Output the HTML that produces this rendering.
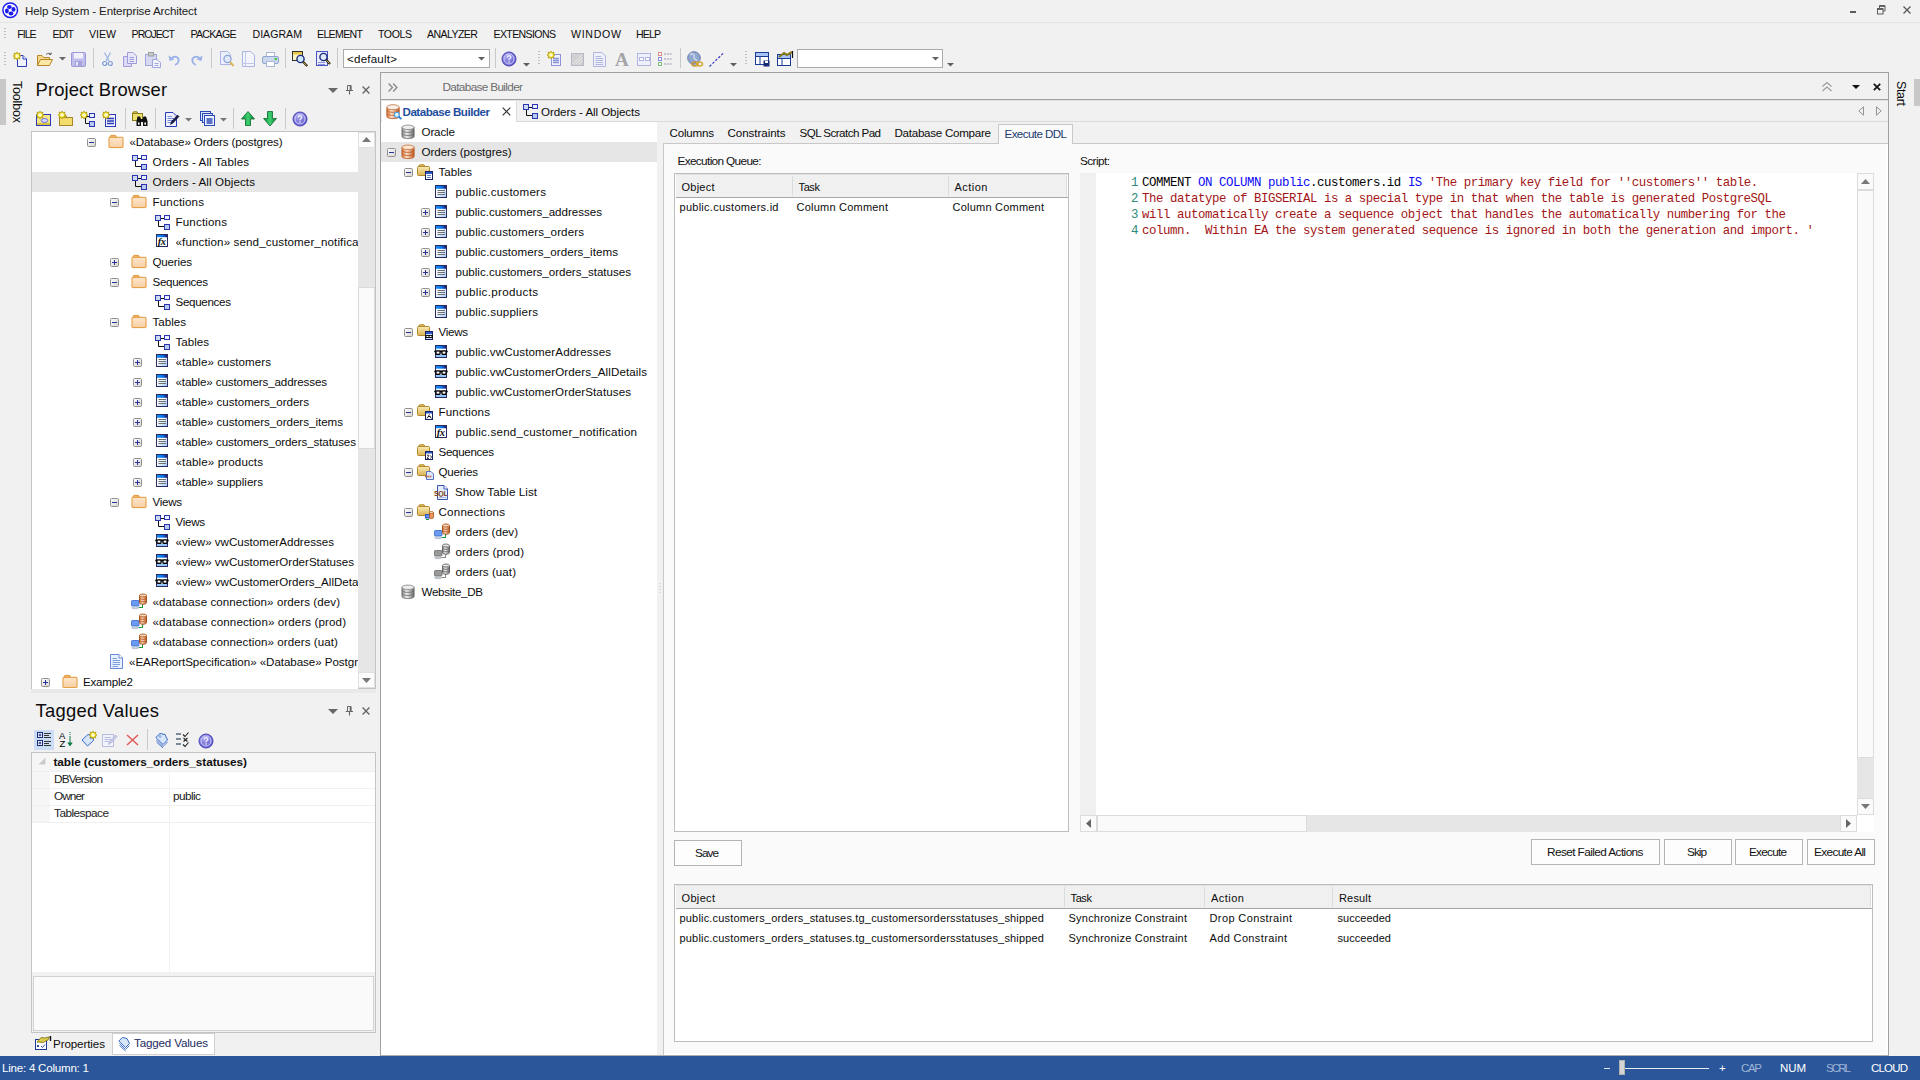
<!DOCTYPE html><html><head><meta charset="utf-8"><title>Help System - Enterprise Architect</title><style>
html,body{margin:0;padding:0}
body{width:1920px;height:1080px;overflow:hidden;background:#f1f1f1;position:relative;font-family:'Liberation Sans',sans-serif;}
body>div,body>svg{position:absolute}
.t{position:absolute}
.i{position:absolute;overflow:visible}
</style></head><body><svg width="0" height="0" style="position:absolute"><defs><linearGradient id="gFold" x1="0" y1="0" x2="0" y2="1"><stop offset="0" stop-color="#fde6cc"/><stop offset="1" stop-color="#f8cfa2"/></linearGradient><linearGradient id="gYF" x1="0" y1="0" x2="0" y2="1"><stop offset="0" stop-color="#f9ebb4"/><stop offset="1" stop-color="#d9b254"/></linearGradient><linearGradient id="gBlueBar" x1="0" y1="0" x2="1" y2="0"><stop offset="0" stop-color="#0a3fa8"/><stop offset="1" stop-color="#5aa0f0"/></linearGradient><linearGradient id="gBar2" x1="0" y1="0" x2="1" y2="0"><stop offset="0" stop-color="#1492ff"/><stop offset=".6" stop-color="#0a6ee6"/><stop offset="1" stop-color="#1a1a6e"/></linearGradient><linearGradient id="gTB" x1="0" y1="0" x2="1" y2="1"><stop offset="0" stop-color="#ffffff"/><stop offset=".45" stop-color="#f4f8ff"/><stop offset="1" stop-color="#9cc6fa"/></linearGradient><linearGradient id="gCylG" x1="0" y1="0" x2="1" y2="0"><stop offset="0" stop-color="#8a8a8a"/><stop offset=".4" stop-color="#eeeeee"/><stop offset="1" stop-color="#6a6a6a"/></linearGradient><linearGradient id="gCylO" x1="0" y1="0" x2="1" y2="0"><stop offset="0" stop-color="#d8763a"/><stop offset=".4" stop-color="#fde0c8"/><stop offset="1" stop-color="#c05a22"/></linearGradient><radialGradient id="gHelp" cx=".4" cy=".35" r=".7"><stop offset="0" stop-color="#a9a6ee"/><stop offset="1" stop-color="#5a55c8"/></radialGradient><linearGradient id="gBox" x1="0" y1="0" x2="1" y2="1"><stop offset="0" stop-color="#ffffff"/><stop offset="1" stop-color="#d6d3cc"/></linearGradient><linearGradient id="gUp" x1="0" y1="0" x2="1" y2="0"><stop offset="0" stop-color="#0a8a3a"/><stop offset=".5" stop-color="#3ed070"/><stop offset="1" stop-color="#0a7a30"/></linearGradient></defs></svg>
<div style="left:0px;top:22px;width:1920px;height:1px;background:#e4e4e4;"></div>
<svg class="i" style="left:2px;top:2px" width="17" height="17" viewBox="0 0 17 17"><circle cx="8.2" cy="8.2" r="7.3" fill="#fff" stroke="#1c1cf2" stroke-width="1.5"/><g fill="#1c1cf2"><ellipse cx="7.4" cy="4.9" rx="2.4" ry="2" /><ellipse cx="11.5" cy="7.4" rx="2" ry="2.4"/><ellipse cx="9" cy="11.5" rx="2.4" ry="2"/><ellipse cx="4.9" cy="9" rx="2" ry="2.4"/></g></svg>
<div id="t0" class="t" style="left:25px;top:3.00px;height:16px;line-height:16px;font-size:11.6px;color:#222;white-space:pre;letter-spacing:-0.138px;">Help System - Enterprise Architect</div>
<div style="left:1850px;top:11px;width:6px;height:2px;background:#5c5c5c;"></div>
<svg class="i" style="left:1877px;top:5px" width="9" height="10" viewBox="0 0 9 10"><path d="M2.5 3.5V.5H8V6H6" fill="none" stroke="#5c5c5c"/><path d="M2.5 1.2H8" stroke="#5c5c5c" stroke-width="1.4"/><rect x=".5" y="3.5" width="5.5" height="5.5" fill="none" stroke="#5c5c5c"/><path d="M.5 4.2H6" stroke="#5c5c5c" stroke-width="1.4"/></svg>
<svg class="i" style="left:1903px;top:6px" width="8" height="8" viewBox="0 0 8 8"><path d="M.5 .5L7.5 7.5M7.5 .5L.5 7.5" stroke="#555" stroke-width="1.2"/></svg>
<div style="left:4px;top:28px;width:2px;height:1px;background:#bdbdbd;"></div>
<div style="left:4px;top:31px;width:2px;height:1px;background:#bdbdbd;"></div>
<div style="left:4px;top:34px;width:2px;height:1px;background:#bdbdbd;"></div>
<div style="left:4px;top:37px;width:2px;height:1px;background:#bdbdbd;"></div>
<div id="t1" class="t" style="left:17.3px;top:27.00px;height:15px;line-height:15px;font-size:10.6px;color:#0c0c0c;white-space:pre;letter-spacing:-1.025px;">FILE</div>
<div id="t2" class="t" style="left:52.5px;top:27.00px;height:15px;line-height:15px;font-size:10.6px;color:#0c0c0c;white-space:pre;letter-spacing:-0.880px;">EDIT</div>
<div id="t3" class="t" style="left:89px;top:27.00px;height:15px;line-height:15px;font-size:10.6px;color:#0c0c0c;white-space:pre;letter-spacing:-0.026px;">VIEW</div>
<div id="t4" class="t" style="left:131.6px;top:27.00px;height:15px;line-height:15px;font-size:10.6px;color:#0c0c0c;white-space:pre;letter-spacing:-1.009px;">PROJECT</div>
<div id="t5" class="t" style="left:190.5px;top:27.00px;height:15px;line-height:15px;font-size:10.6px;color:#0c0c0c;white-space:pre;letter-spacing:-0.740px;">PACKAGE</div>
<div id="t6" class="t" style="left:252.5px;top:27.00px;height:15px;line-height:15px;font-size:10.6px;color:#0c0c0c;white-space:pre;letter-spacing:0.008px;">DIAGRAM</div>
<div id="t7" class="t" style="left:317px;top:27.00px;height:15px;line-height:15px;font-size:10.6px;color:#0c0c0c;white-space:pre;letter-spacing:-0.674px;">ELEMENT</div>
<div id="t8" class="t" style="left:378px;top:27.00px;height:15px;line-height:15px;font-size:10.6px;color:#0c0c0c;white-space:pre;letter-spacing:-0.430px;">TOOLS</div>
<div id="t9" class="t" style="left:427px;top:27.00px;height:15px;line-height:15px;font-size:10.6px;color:#0c0c0c;white-space:pre;letter-spacing:-0.594px;">ANALYZER</div>
<div id="t10" class="t" style="left:493.5px;top:27.00px;height:15px;line-height:15px;font-size:10.6px;color:#0c0c0c;white-space:pre;letter-spacing:-0.644px;">EXTENSIONS</div>
<div id="t11" class="t" style="left:571px;top:27.00px;height:15px;line-height:15px;font-size:10.6px;color:#0c0c0c;white-space:pre;letter-spacing:0.703px;">WINDOW</div>
<div id="t12" class="t" style="left:636px;top:27.00px;height:15px;line-height:15px;font-size:10.6px;color:#0c0c0c;white-space:pre;letter-spacing:-0.896px;">HELP</div>
<div style="left:4px;top:52px;width:2px;height:1px;background:#bdbdbd;"></div>
<div style="left:4px;top:55px;width:2px;height:1px;background:#bdbdbd;"></div>
<div style="left:4px;top:58px;width:2px;height:1px;background:#bdbdbd;"></div>
<div style="left:4px;top:61px;width:2px;height:1px;background:#bdbdbd;"></div>
<div style="left:4px;top:64px;width:2px;height:1px;background:#bdbdbd;"></div>
<svg class="i" style="left:13px;top:51px" width="16" height="17" viewBox="0 0 16 17"><path d="M4.5 4.5H10L13.5 8V15.5H4.5Z" fill="#eef3ff" stroke="#2a3ab8"/><path d="M10 4.5V8H13.5" fill="#fff" stroke="#2a3ab8"/></svg>
<svg class="i" style="left:13px;top:52px;" width="8" height="8" viewBox="0 0 8 8"><path d="M4 0 L5 1.8 L7 1 L6.3 3 L8 4 L6.3 5 L7 7 L5 6.2 L4 8 L3 6.2 L1 7 L1.7 5 L0 4 L1.7 3 L1 1 L3 1.8 Z" fill="#f4e01a" stroke="#a89410" stroke-width=".7"/><circle cx="4" cy="4" r="1.8" fill="#fffbd8"/></svg>
<svg class="i" style="left:36px;top:52px" width="18" height="15" viewBox="0 0 18 15"><path d="M1.5 13.5V3.5H6L7.5 5.5H13.5V7" fill="#f6d88a" stroke="#b8862a"/><path d="M1.5 13.5L4.5 7.5H16.5L13.5 13.5Z" fill="#fbe7a6" stroke="#b8862a"/><path d="M10 2.5C12 .8 14 1 15 2.5M15 2.5L15.3 .6M15 2.5L13 2.4" fill="none" stroke="#555" stroke-width=".9"/></svg>
<svg class="i" style="left:59px;top:57px" width="7" height="4" viewBox="0 0 7 4"><path d="M0 0H7L3.5 3.5Z" fill="#6a6a6a"/></svg>
<svg class="i" style="left:71px;top:52px" width="15" height="15" viewBox="0 0 15 15"><rect x=".5" y=".5" width="14" height="14" rx="1" fill="#bfbdea" stroke="#9a98d8"/><rect x="3" y="1" width="9" height="5.5" fill="#f1f0fb"/><rect x="4" y="9" width="7" height="5.5" fill="#a5a3dc"/><rect x="5" y="10" width="2" height="3.5" fill="#e8e8f8"/></svg>
<div style="left:93px;top:48px;width:1px;height:20px;background:#c9c9c9;"></div>
<svg class="i" style="left:102px;top:52px" width="11" height="15" viewBox="0 0 11 15"><path d="M2.5 .5L7 9M8.5 .5L4 9" stroke="#9db7e6" stroke-width="1.3" fill="none"/><circle cx="2.7" cy="11.5" r="2" fill="none" stroke="#7d9ad8" stroke-width="1.2"/><circle cx="8.3" cy="11.5" r="2" fill="none" stroke="#7d9ad8" stroke-width="1.2"/></svg>
<svg class="i" style="left:123px;top:52px" width="14" height="15" viewBox="0 0 14 15"><path d="M.5 4.5H6L8.5 7V14.5H.5Z" fill="#dcdaf4" stroke="#9f9cdc"/><path d="M4.5 .5H10L13.5 4V11.5H4.5Z" fill="#e9e8f8" stroke="#9f9cdc"/><path d="M6.5 5.5H11M6.5 7.5H11M6.5 9.5H11" stroke="#9f9cdc"/></svg>
<svg class="i" style="left:145px;top:52px" width="16" height="16" viewBox="0 0 16 16"><rect x=".5" y="2.5" width="11" height="11" fill="#d6d9f2" stroke="#9fa6dc"/><rect x="3.5" y=".5" width="5" height="3.5" fill="#c9c9c9" stroke="#a0a0a0"/><path d="M7.5 7.5H12L15.5 10.5V15.5H7.5Z" fill="#f4f4fc" stroke="#9fa6dc"/><path d="M9.5 11.5H13.5M9.5 13.5H13.5" stroke="#9fa6dc"/></svg>
<svg class="i" style="left:168px;top:53px" width="13" height="13" viewBox="0 0 13 13"><path d="M3 5.5C7 2 11.5 4.5 10.5 8.5C10 10.5 8.5 11.5 7 12" fill="none" stroke="#9bb3e8" stroke-width="1.8"/><path d="M.5 2.5L1.5 8L6.5 6.5Z" fill="#9bb3e8"/></svg>
<svg class="i" style="left:190px;top:53px" width="13" height="13" viewBox="0 0 13 13"><path d="M10 5.5C6 2 1.5 4.5 2.5 8.5C3 10.5 4.5 11.5 6 12" fill="none" stroke="#9bb3e8" stroke-width="1.8"/><path d="M12.5 2.5L11.5 8L6.5 6.5Z" fill="#9bb3e8"/></svg>
<div style="left:211px;top:48px;width:1px;height:20px;background:#c9c9c9;"></div>
<svg class="i" style="left:220px;top:51px" width="15" height="16" viewBox="0 0 15 16"><path d="M.5 .5H7.5L10.5 3.5V13.5H.5Z" fill="#edf0fb" stroke="#aab4e2"/><circle cx="7.5" cy="8" r="3.6" fill="#dfe9fb" stroke="#8aa0d8" stroke-width="1.2"/><path d="M10 11L13.5 15" stroke="#d8b85a" stroke-width="2"/></svg>
<svg class="i" style="left:242px;top:51px" width="13" height="16" viewBox="0 0 13 16"><path d="M.5 .5H8.5L12.5 4V15.5H.5Z" fill="#f4f5fc" stroke="#aab4e2"/><path d="M3.5 .5V15.5M.5 12.5H12.5" stroke="#c0c8ea" fill="none"/></svg>
<svg class="i" style="left:262px;top:52px" width="17" height="15" viewBox="0 0 17 15"><rect x="4.5" y=".5" width="8" height="5" fill="#fff" stroke="#a9b6d8"/><rect x=".5" y="4.5" width="16" height="7" rx="1.5" fill="#ccd8ee" stroke="#8fa3cf"/><rect x="4.5" y="9.5" width="8" height="5" fill="#fff" stroke="#a9b6d8"/><rect x="12.5" y="6" width="2.5" height="2" fill="#45c445"/></svg>
<div style="left:285px;top:48px;width:1px;height:20px;background:#c9c9c9;"></div>
<svg class="i" style="left:292px;top:51px" width="17" height="17" viewBox="0 0 17 17"><rect x=".5" y=".5" width="10" height="9" fill="#fdf4c4" stroke="#333"/><rect x="1" y="1" width="9" height="2.5" fill="#e8c64a"/><circle cx="8.5" cy="8" r="3.6" fill="#cfe6ff" stroke="#1a2a7a" stroke-width="1.4"/><path d="M11 10.8L15.2 15" stroke="#1a1a1a" stroke-width="2.2"/><path d="M11.6 11.4L14.6 14.4" stroke="#e8c030" stroke-width="1"/></svg>
<svg class="i" style="left:316px;top:51px" width="16" height="17" viewBox="0 0 16 17"><rect x=".5" y=".5" width="11" height="14" fill="#e9ebfb" stroke="#4a52c8"/><path d="M2 11.5H9M2 13.5H9" stroke="#8890e0"/><circle cx="7.5" cy="6" r="3.6" fill="#dfe9fb" stroke="#1a2a7a" stroke-width="1.4"/><path d="M10 8.8L14 13" stroke="#1a1a1a" stroke-width="2.2"/><path d="M10.6 9.4L13.4 12.4" stroke="#e8c030" stroke-width="1"/></svg>
<div style="left:337px;top:48px;width:1px;height:20px;background:#c9c9c9;"></div>
<div style="left:343px;top:49px;width:147px;height:19px;background:#fff;border:1px solid #ababab;box-sizing:border-box;"></div>
<div id="t13" class="t" style="left:347px;top:51.00px;height:16px;line-height:16px;font-size:11.6px;color:#0c0c0c;white-space:pre;letter-spacing:0.205px;">&lt;default&gt;</div>
<svg class="i" style="left:478px;top:57px" width="7" height="4" viewBox="0 0 7 4"><path d="M0 0H7L3.5 3.5Z" fill="#606060"/></svg>
<div style="left:495px;top:48px;width:1px;height:20px;background:#c9c9c9;"></div>
<svg class="i" style="left:501px;top:51px;" width="16" height="16" viewBox="0 0 16 16"><circle cx="8" cy="8" r="7" fill="url(#gHelp)" stroke="#4a45b8"/><circle cx="8" cy="8" r="5" fill="none" stroke="#d8d6fa" stroke-width=".9"/><path d="M6.2 6.4 C6.2 4.2 9.9 4.2 9.9 6.3 C9.9 7.6 8 7.6 8 9.2" fill="none" stroke="#eceaff" stroke-width="1.3"/><rect x="7.3" y="10.3" width="1.4" height="1.4" fill="#eceaff"/></svg>
<svg class="i" style="left:523px;top:63px" width="7" height="4" viewBox="0 0 7 4"><path d="M0 0H7L3.5 3.5Z" fill="#606060"/></svg>
<div style="left:538px;top:51px;width:2px;height:1px;background:#bdbdbd;"></div>
<div style="left:538px;top:54px;width:2px;height:1px;background:#bdbdbd;"></div>
<div style="left:538px;top:57px;width:2px;height:1px;background:#bdbdbd;"></div>
<div style="left:538px;top:60px;width:2px;height:1px;background:#bdbdbd;"></div>
<div style="left:538px;top:63px;width:2px;height:1px;background:#bdbdbd;"></div>
<svg class="i" style="left:548px;top:51px" width="14" height="16" viewBox="0 0 14 16"><rect x="3.5" y="3.5" width="9" height="11" fill="#eef0fb" stroke="#8d95d8"/><path d="M5 7.5H11M5 9.5H11M5 11.5H11" stroke="#8d95d8" stroke-width="1.4"/></svg>
<svg class="i" style="left:547px;top:51px;" width="8" height="8" viewBox="0 0 8 8"><path d="M4 0 L5 1.8 L7 1 L6.3 3 L8 4 L6.3 5 L7 7 L5 6.2 L4 8 L3 6.2 L1 7 L1.7 5 L0 4 L1.7 3 L1 1 L3 1.8 Z" fill="#f4e01a" stroke="#a89410" stroke-width=".7"/><circle cx="4" cy="4" r="1.8" fill="#fffbd8"/></svg>
<svg class="i" style="left:571px;top:53px" width="13" height="13" viewBox="0 0 13 13"><rect x=".5" y=".5" width="12" height="12" fill="#d2d2d2" stroke="#b8b8c8"/><path d="M2 11L11 2M5 11L11 5M8 11L11 8" stroke="#e8e8e8"/></svg>
<svg class="i" style="left:593px;top:52px" width="14" height="15" viewBox="0 0 14 15"><path d="M.5 .5H9L12.5 4V14.5H.5Z" fill="#eef0fb" stroke="#b0b6e0"/><path d="M2.5 4.5H8M2.5 6.5H10M2.5 8.5H10M2.5 10.5H10M2.5 12.5H10" stroke="#b0b6e0"/></svg>
<div id="t14" class="t" style="left:615px;top:46.00px;height:27px;line-height:27px;font-size:19px;color:#a4a4a8;white-space:pre;font-family:'Liberation Serif',serif;font-weight:bold;letter-spacing:-0.734px;">A</div>
<svg class="i" style="left:637px;top:53px" width="14" height="13" viewBox="0 0 14 13"><rect x=".5" y=".5" width="13" height="12" fill="#eef0fb" stroke="#b0b6e0"/><rect x="2.5" y="4.5" width="4" height="3" fill="#fff" stroke="#b0b6e0"/><rect x="8.5" y="4.5" width="4" height="3" fill="#fff" stroke="#b0b6e0"/></svg>
<svg class="i" style="left:658px;top:52px" width="15" height="15" viewBox="0 0 15 15"><rect x=".5" y=".5" width="3" height="3" fill="#fff" stroke="#e08a8a"/><rect x=".5" y="5.5" width="3" height="3" fill="#fff" stroke="#8a8ae0"/><rect x=".5" y="10.5" width="3" height="3" fill="#fff" stroke="#7ac07a"/><path d="M6 2H14M6 7H14M6 12H14" stroke="#b8b8c8" stroke-width="1.4" stroke-dasharray="2 .8"/></svg>
<div style="left:680px;top:48px;width:1px;height:20px;background:#c9c9c9;"></div>
<svg class="i" style="left:687px;top:51px" width="17" height="17" viewBox="0 0 17 17"><circle cx="7" cy="7" r="6.3" fill="#8fa6cf" stroke="#6a7fae"/><path d="M3 4C5 2 8 3 7 6C6 8 9 8 10 10" fill="none" stroke="#c8d4ec" stroke-width="1.6"/><ellipse cx="8" cy="13" rx="3" ry="2" fill="none" stroke="#c8962a" stroke-width="1.5"/><ellipse cx="12.5" cy="13" rx="3" ry="2" fill="none" stroke="#d8a83a" stroke-width="1.5"/></svg>
<svg class="i" style="left:709px;top:52px" width="16" height="15" viewBox="0 0 16 15"><path d="M.5 14.5L15 .5" stroke="#3a3ac8" stroke-width="1.2" stroke-dasharray="2.5 1.6"/></svg>
<svg class="i" style="left:730px;top:63px" width="7" height="4" viewBox="0 0 7 4"><path d="M0 0H7L3.5 3.5Z" fill="#606060"/></svg>
<div style="left:745px;top:51px;width:2px;height:1px;background:#bdbdbd;"></div>
<div style="left:745px;top:54px;width:2px;height:1px;background:#bdbdbd;"></div>
<div style="left:745px;top:57px;width:2px;height:1px;background:#bdbdbd;"></div>
<div style="left:745px;top:60px;width:2px;height:1px;background:#bdbdbd;"></div>
<div style="left:745px;top:63px;width:2px;height:1px;background:#bdbdbd;"></div>
<svg class="i" style="left:755px;top:52px" width="16" height="16" viewBox="0 0 16 16"><rect x=".5" y=".5" width="13" height="12" fill="#fff" stroke="#1a3a9a"/><path d="M.5 4.5H13.5M5 .5V12.5" stroke="#1a3a9a"/><rect x="1" y="1" width="12" height="3" fill="#a8c4f4"/><rect x="8.5" y="8.5" width="6" height="6" fill="#1a2a7a"/><rect x="10" y="9" width="3" height="2" fill="#fff"/></svg>
<svg class="i" style="left:777px;top:51px" width="17" height="16" viewBox="0 0 17 16"><rect x=".5" y="3.5" width="13" height="11" fill="#fff" stroke="#1a3a9a"/><path d="M.5 7.5H13.5M5 3.5V14.5" stroke="#1a3a9a"/><rect x="1" y="4" width="12" height="3" fill="#a8c4f4"/><path d="M2 6L7 2L10 4L15 1" stroke="#8a7a1a" stroke-width="2.2" fill="none"/><path d="M15.5 0V7" stroke="#111" stroke-width="1.2"/></svg>
<div style="left:797px;top:49px;width:146px;height:19px;background:#fff;border:1px solid #ababab;box-sizing:border-box;"></div>
<svg class="i" style="left:932px;top:57px" width="7" height="4" viewBox="0 0 7 4"><path d="M0 0H7L3.5 3.5Z" fill="#606060"/></svg>
<svg class="i" style="left:947px;top:63px" width="7" height="4" viewBox="0 0 7 4"><path d="M0 0H7L3.5 3.5Z" fill="#606060"/></svg>
<div style="left:0px;top:79px;width:6px;height:46px;background:#c8c8c8;"></div>
<div id="t15" class="t rot" style="left:0px;top:-13.00px;height:18px;line-height:18px;font-size:12.5px;color:#0c0c0c;white-space:pre;letter-spacing:-0.182px;transform-origin:0 0;transform:translate(26px,81px) rotate(90deg);top:0;left:0;">Toolbox</div>
<div style="left:1914px;top:79px;width:6px;height:27px;background:#c8c8c8;"></div>
<div id="t16" class="t rot" style="left:0px;top:-13.00px;height:18px;line-height:18px;font-size:12.5px;color:#0c0c0c;white-space:pre;letter-spacing:-0.352px;transform-origin:0 0;transform:translate(1910px,81px) rotate(90deg);top:0;left:0;">Start</div>
<div id="t17" class="t" style="left:35.5px;top:77.00px;height:26px;line-height:26px;font-size:18.4px;color:#0c0c0c;white-space:pre;letter-spacing:0.122px;">Project Browser</div>
<svg class="i" style="left:328px;top:88px" width="10" height="5" viewBox="0 0 10 5"><path d="M0 0H10L5 5Z" fill="#686868"/></svg>
<svg class="i" style="left:345px;top:85px" width="9" height="10" viewBox="0 0 9 10"><path d="M2.5 .5H6V5.5H2.5Z" fill="none" stroke="#686868"/><path d="M5.5 .5V5.5" stroke="#686868" stroke-width="1.6"/><path d="M.8 5.5H8M4.5 5.5V9.5" fill="none" stroke="#686868" stroke-width="1.1"/></svg>
<svg class="i" style="left:362px;top:86px" width="8" height="8" viewBox="0 0 8 8"><path d="M.6 .6L7.4 7.4M7.4 .6L.6 7.4" stroke="#686868" stroke-width="1.4"/></svg>
<svg class="i" style="left:36px;top:111px" width="16" height="16" viewBox="0 0 16 16"><rect x=".5" y="3.5" width="14" height="11" fill="#f4e48a" stroke="#2a3ab8"/><ellipse cx="8.5" cy="9.5" rx="3.2" ry="2" fill="#d8d8f8" stroke="#6a6ad8"/><rect x="1" y="12" width="13" height="2" fill="#d8c040"/></svg>
<svg class="i" style="left:36px;top:111px;" width="8" height="8" viewBox="0 0 8 8"><path d="M4 0 L5 1.8 L7 1 L6.3 3 L8 4 L6.3 5 L7 7 L5 6.2 L4 8 L3 6.2 L1 7 L1.7 5 L0 4 L1.7 3 L1 1 L3 1.8 Z" fill="#f4e01a" stroke="#a89410" stroke-width=".7"/><circle cx="4" cy="4" r="1.8" fill="#fffbd8"/></svg>
<svg class="i" style="left:58px;top:111px" width="16" height="16" viewBox="0 0 16 16"><path d="M2.5 6.5L3.5 4.5H8L9 6.5Z" fill="#e8c64a" stroke="#a8862a"/><rect x="1.5" y="6.5" width="13" height="8" fill="#f4dc6a" stroke="#a8862a"/></svg>
<svg class="i" style="left:58px;top:111px;" width="8" height="8" viewBox="0 0 8 8"><path d="M4 0 L5 1.8 L7 1 L6.3 3 L8 4 L6.3 5 L7 7 L5 6.2 L4 8 L3 6.2 L1 7 L1.7 5 L0 4 L1.7 3 L1 1 L3 1.8 Z" fill="#f4e01a" stroke="#a89410" stroke-width=".7"/><circle cx="4" cy="4" r="1.8" fill="#fffbd8"/></svg>
<svg class="i" style="left:80px;top:111px" width="16" height="16" viewBox="0 0 16 16"><path d="M6 5.5H10M5.5 7V12.5H9" fill="none" stroke="#111"/><rect x="9.5" y="2.5" width="5" height="4" fill="#e8eefc" stroke="#2a35b0"/><rect x="9.5" y="10.5" width="5" height="5" fill="#b8c8f0" stroke="#2a35b0"/></svg>
<svg class="i" style="left:80px;top:111px;" width="8" height="8" viewBox="0 0 8 8"><path d="M4 0 L5 1.8 L7 1 L6.3 3 L8 4 L6.3 5 L7 7 L5 6.2 L4 8 L3 6.2 L1 7 L1.7 5 L0 4 L1.7 3 L1 1 L3 1.8 Z" fill="#f4e01a" stroke="#a89410" stroke-width=".7"/><circle cx="4" cy="4" r="1.8" fill="#fffbd8"/></svg>
<svg class="i" style="left:102px;top:111px" width="16" height="16" viewBox="0 0 16 16"><rect x="3.5" y="3.5" width="10" height="12" fill="#eef0fb" stroke="#2a3ab8"/><path d="M5 7.5H12M5 10H12M5 12.5H12" stroke="#2a3ab8" stroke-width="1.5"/></svg>
<svg class="i" style="left:102px;top:111px;" width="8" height="8" viewBox="0 0 8 8"><path d="M4 0 L5 1.8 L7 1 L6.3 3 L8 4 L6.3 5 L7 7 L5 6.2 L4 8 L3 6.2 L1 7 L1.7 5 L0 4 L1.7 3 L1 1 L3 1.8 Z" fill="#f4e01a" stroke="#a89410" stroke-width=".7"/><circle cx="4" cy="4" r="1.8" fill="#fffbd8"/></svg>
<div style="left:125px;top:108px;width:1px;height:21px;background:#c9c9c9;"></div>
<svg class="i" style="left:132px;top:111px" width="16" height="16" viewBox="0 0 16 16"><path d="M.5 2.5L1.5 .8H5L6 2.5Z" fill="#e8d060" stroke="#8a7a1a"/><rect x=".5" y="2.5" width="10" height="7" fill="#f0e070" stroke="#8a7a1a"/><path d="M5.5 5.5H8L9 8H10.5L11.5 5.5H14L15.5 10V15H11V11H9V15H4.5V10Z" fill="#111"/><rect x="6" y="11.5" width="1.6" height="2.2" fill="#fff"/><rect x="12.4" y="11.5" width="1.6" height="2.2" fill="#fff"/></svg>
<div style="left:155px;top:108px;width:1px;height:21px;background:#c9c9c9;"></div>
<svg class="i" style="left:165px;top:112px" width="15" height="15" viewBox="0 0 15 15"><path d="M.5 .5H8L11.5 4V14.5H.5Z" fill="#eef0fb" stroke="#2a3ab8"/><path d="M2.5 4.5H7M2.5 6.5H9M2.5 8.5H8M2.5 10.5H6" stroke="#7a8ad8"/><path d="M5.5 12.5L6.5 9.5L12.5 3L14 4.5L8 11Z" fill="#1a1a5a" stroke="#111" stroke-width=".6"/></svg>
<svg class="i" style="left:185px;top:118px" width="7" height="4" viewBox="0 0 7 4"><path d="M0 0H7L3.5 3.5Z" fill="#777"/></svg>
<svg class="i" style="left:200px;top:111px" width="16" height="16" viewBox="0 0 16 16"><rect x=".5" y=".5" width="10" height="9" fill="#dfe6fb" stroke="#2a4ab8"/><rect x="2.5" y="2.5" width="10" height="9" fill="#dfe6fb" stroke="#2a4ab8"/><rect x="4.5" y="4.5" width="10" height="10" fill="#eef3ff" stroke="#2a4ab8"/><path d="M6.5 8H12.5M6.5 10H12.5M6.5 12H12.5" stroke="#2a4ab8" stroke-width="1.3"/></svg>
<svg class="i" style="left:220px;top:118px" width="7" height="4" viewBox="0 0 7 4"><path d="M0 0H7L3.5 3.5Z" fill="#777"/></svg>
<div style="left:233px;top:108px;width:1px;height:21px;background:#c9c9c9;"></div>
<svg class="i" style="left:241px;top:111px" width="14" height="16" viewBox="0 0 14 16"><path d="M7 .5L13.5 8H9.5V14.5H4.5V8H.5Z" fill="url(#gUp)" stroke="#0a6a2a" stroke-width=".8"/></svg>
<svg class="i" style="left:263px;top:111px" width="14" height="16" viewBox="0 0 14 16"><path d="M7 15L13.5 7.5H9.5V.5H4.5V7.5H.5Z" fill="url(#gUp)" stroke="#0a6a2a" stroke-width=".8"/></svg>
<div style="left:285px;top:108px;width:1px;height:21px;background:#c9c9c9;"></div>
<svg class="i" style="left:292px;top:111px;" width="16" height="16" viewBox="0 0 16 16"><circle cx="8" cy="8" r="7" fill="url(#gHelp)" stroke="#4a45b8"/><circle cx="8" cy="8" r="5" fill="none" stroke="#d8d6fa" stroke-width=".9"/><path d="M6.2 6.4 C6.2 4.2 9.9 4.2 9.9 6.3 C9.9 7.6 8 7.6 8 9.2" fill="none" stroke="#eceaff" stroke-width="1.3"/><rect x="7.3" y="10.3" width="1.4" height="1.4" fill="#eceaff"/></svg>
<div style="left:31px;top:131px;width:345px;height:558px;background:#fff;border:1px solid #c4c4c4;box-sizing:border-box;"></div>
<div style="left:31px;top:689px;width:345px;height:4px;background:#e9e9e9;"></div>
<div style="left:32px;top:172px;width:326px;height:20px;background:#e6e6e6;"></div>
<div style="left:358px;top:132px;width:17px;height:556px;background:#e6e6e6;"></div>
<div style="left:358px;top:132px;width:17px;height:16px;background:#fcfcfc;border:1px solid #e0e0e0;box-sizing:border-box;"></div>
<svg class="i" style="left:362px;top:137px" width="9" height="5" viewBox="0 0 9 5"><path d="M0 5H9L4.5 0Z" fill="#777"/></svg>
<div style="left:358px;top:287px;width:17px;height:162px;background:#fafafa;border:1px solid #dadada;box-sizing:border-box;"></div>
<div style="left:358px;top:672px;width:17px;height:16px;background:#fcfcfc;border:1px solid #e0e0e0;box-sizing:border-box;"></div>
<svg class="i" style="left:362px;top:678px" width="9" height="5" viewBox="0 0 9 5"><path d="M0 0H9L4.5 5Z" fill="#777"/></svg>
<svg class="i" style="left:87px;top:138px;" width="9" height="9" viewBox="0 0 9 9"><rect x=".5" y=".5" width="8" height="8" rx="1" fill="url(#gBox)" stroke="#919191"/><path d="M2 4.5H7" stroke="#26349a" stroke-width="1"/></svg>
<svg class="i" style="left:108px;top:134px;" width="16" height="15" viewBox="0 0 16 16"><path d="M1.5 3.5 L2.5 1.5 H7.5 L8.5 3.5 Z" fill="#f6c88c" stroke="#e0922e"/><rect x=".5" y="3.5" width="15" height="11" rx=".6" fill="url(#gFold)" stroke="#e0922e"/></svg>
<div id="t18" class="t" style="left:129.5px;top:134.00px;height:16px;line-height:16px;font-size:11.6px;color:#0c0c0c;white-space:pre;letter-spacing:-0.133px;">«Database» Orders (postgres)</div>
<svg class="i" style="left:132px;top:155px;" width="16" height="16" viewBox="0 0 16 16"><path d="M5 3.5H10 M3.5 5V11.5H9" fill="none" stroke="#111" stroke-width="1"/><rect x=".5" y=".5" width="5" height="5" fill="#cdd8f4" stroke="#2a35b0"/><rect x="9.5" y=".5" width="5" height="4" fill="#e8eefc" stroke="#2a35b0"/><rect x="9.5" y="9.5" width="5" height="5" fill="#b8c8f0" stroke="#2a35b0"/></svg>
<div id="t19" class="t" style="left:152.5px;top:154.00px;height:16px;line-height:16px;font-size:11.6px;color:#0c0c0c;white-space:pre;letter-spacing:0.110px;">Orders - All Tables</div>
<svg class="i" style="left:132px;top:175px;" width="16" height="16" viewBox="0 0 16 16"><path d="M5 3.5H10 M3.5 5V11.5H9" fill="none" stroke="#111" stroke-width="1"/><rect x=".5" y=".5" width="5" height="5" fill="#cdd8f4" stroke="#2a35b0"/><rect x="9.5" y=".5" width="5" height="4" fill="#e8eefc" stroke="#2a35b0"/><rect x="9.5" y="9.5" width="5" height="5" fill="#b8c8f0" stroke="#2a35b0"/></svg>
<div id="t20" class="t" style="left:152.5px;top:174.00px;height:16px;line-height:16px;font-size:11.6px;color:#0c0c0c;white-space:pre;letter-spacing:0.104px;">Orders - All Objects</div>
<svg class="i" style="left:110px;top:198px;" width="9" height="9" viewBox="0 0 9 9"><rect x=".5" y=".5" width="8" height="8" rx="1" fill="url(#gBox)" stroke="#919191"/><path d="M2 4.5H7" stroke="#26349a" stroke-width="1"/></svg>
<svg class="i" style="left:131px;top:194px;" width="16" height="15" viewBox="0 0 16 16"><path d="M1.5 3.5 L2.5 1.5 H7.5 L8.5 3.5 Z" fill="#f6c88c" stroke="#e0922e"/><rect x=".5" y="3.5" width="15" height="11" rx=".6" fill="url(#gFold)" stroke="#e0922e"/></svg>
<div id="t21" class="t" style="left:152.5px;top:194.00px;height:16px;line-height:16px;font-size:11.6px;color:#0c0c0c;white-space:pre;letter-spacing:0.154px;">Functions</div>
<svg class="i" style="left:155px;top:215px;" width="16" height="16" viewBox="0 0 16 16"><path d="M5 3.5H10 M3.5 5V11.5H9" fill="none" stroke="#111" stroke-width="1"/><rect x=".5" y=".5" width="5" height="5" fill="#cdd8f4" stroke="#2a35b0"/><rect x="9.5" y=".5" width="5" height="4" fill="#e8eefc" stroke="#2a35b0"/><rect x="9.5" y="9.5" width="5" height="5" fill="#b8c8f0" stroke="#2a35b0"/></svg>
<div id="t22" class="t" style="left:175.5px;top:214.00px;height:16px;line-height:16px;font-size:11.6px;color:#0c0c0c;white-space:pre;letter-spacing:0.154px;">Functions</div>
<svg class="i" style="left:156px;top:234px;" width="14" height="16" viewBox="0 0 14 16"><rect x=".5" y=".5" width="11" height="12" fill="#fff" stroke="#2a2a5e"/><rect x="1" y="1" width="10" height="2.2" fill="url(#gBar2)"/><text x="1.8" y="11.3" font-family="Liberation Serif,serif" font-style="italic" font-weight="bold" font-size="10.5" fill="#111" letter-spacing="-.6">fx</text></svg>
<div id="t23" class="t" style="left:175.5px;top:234.00px;height:16px;line-height:16px;font-size:11.6px;color:#0c0c0c;white-space:pre;letter-spacing:0.120px;width:182.5px;overflow:hidden;"><span>«function» send_customer_notifica</span>tion</div>
<svg class="i" style="left:110px;top:258px;" width="9" height="9" viewBox="0 0 9 9"><rect x=".5" y=".5" width="8" height="8" rx="1" fill="url(#gBox)" stroke="#919191"/><path d="M2 4.5H7 M4.5 2V7" stroke="#26349a" stroke-width="1"/></svg>
<svg class="i" style="left:131px;top:254px;" width="16" height="15" viewBox="0 0 16 16"><path d="M1.5 3.5 L2.5 1.5 H7.5 L8.5 3.5 Z" fill="#f6c88c" stroke="#e0922e"/><rect x=".5" y="3.5" width="15" height="11" rx=".6" fill="url(#gFold)" stroke="#e0922e"/></svg>
<div id="t24" class="t" style="left:152.5px;top:254.00px;height:16px;line-height:16px;font-size:11.6px;color:#0c0c0c;white-space:pre;letter-spacing:-0.185px;">Queries</div>
<svg class="i" style="left:110px;top:278px;" width="9" height="9" viewBox="0 0 9 9"><rect x=".5" y=".5" width="8" height="8" rx="1" fill="url(#gBox)" stroke="#919191"/><path d="M2 4.5H7" stroke="#26349a" stroke-width="1"/></svg>
<svg class="i" style="left:131px;top:274px;" width="16" height="15" viewBox="0 0 16 16"><path d="M1.5 3.5 L2.5 1.5 H7.5 L8.5 3.5 Z" fill="#f6c88c" stroke="#e0922e"/><rect x=".5" y="3.5" width="15" height="11" rx=".6" fill="url(#gFold)" stroke="#e0922e"/></svg>
<div id="t25" class="t" style="left:152.5px;top:274.00px;height:16px;line-height:16px;font-size:11.6px;color:#0c0c0c;white-space:pre;letter-spacing:-0.314px;">Sequences</div>
<svg class="i" style="left:155px;top:295px;" width="16" height="16" viewBox="0 0 16 16"><path d="M5 3.5H10 M3.5 5V11.5H9" fill="none" stroke="#111" stroke-width="1"/><rect x=".5" y=".5" width="5" height="5" fill="#cdd8f4" stroke="#2a35b0"/><rect x="9.5" y=".5" width="5" height="4" fill="#e8eefc" stroke="#2a35b0"/><rect x="9.5" y="9.5" width="5" height="5" fill="#b8c8f0" stroke="#2a35b0"/></svg>
<div id="t26" class="t" style="left:175.5px;top:294.00px;height:16px;line-height:16px;font-size:11.6px;color:#0c0c0c;white-space:pre;letter-spacing:-0.314px;">Sequences</div>
<svg class="i" style="left:110px;top:318px;" width="9" height="9" viewBox="0 0 9 9"><rect x=".5" y=".5" width="8" height="8" rx="1" fill="url(#gBox)" stroke="#919191"/><path d="M2 4.5H7" stroke="#26349a" stroke-width="1"/></svg>
<svg class="i" style="left:131px;top:314px;" width="16" height="15" viewBox="0 0 16 16"><path d="M1.5 3.5 L2.5 1.5 H7.5 L8.5 3.5 Z" fill="#f6c88c" stroke="#e0922e"/><rect x=".5" y="3.5" width="15" height="11" rx=".6" fill="url(#gFold)" stroke="#e0922e"/></svg>
<div id="t27" class="t" style="left:152.5px;top:314.00px;height:16px;line-height:16px;font-size:11.6px;color:#0c0c0c;white-space:pre;letter-spacing:-0.003px;">Tables</div>
<svg class="i" style="left:155px;top:335px;" width="16" height="16" viewBox="0 0 16 16"><path d="M5 3.5H10 M3.5 5V11.5H9" fill="none" stroke="#111" stroke-width="1"/><rect x=".5" y=".5" width="5" height="5" fill="#cdd8f4" stroke="#2a35b0"/><rect x="9.5" y=".5" width="5" height="4" fill="#e8eefc" stroke="#2a35b0"/><rect x="9.5" y="9.5" width="5" height="5" fill="#b8c8f0" stroke="#2a35b0"/></svg>
<div id="t28" class="t" style="left:175.5px;top:334.00px;height:16px;line-height:16px;font-size:11.6px;color:#0c0c0c;white-space:pre;letter-spacing:-0.003px;">Tables</div>
<svg class="i" style="left:133px;top:358px;" width="9" height="9" viewBox="0 0 9 9"><rect x=".5" y=".5" width="8" height="8" rx="1" fill="url(#gBox)" stroke="#919191"/><path d="M2 4.5H7 M4.5 2V7" stroke="#26349a" stroke-width="1"/></svg>
<svg class="i" style="left:156px;top:354px;" width="14" height="16" viewBox="0 0 14 16"><rect x=".5" y=".5" width="11" height="12" fill="url(#gTB)" stroke="#2a2a5e"/><rect x="1" y="1" width="10" height="2.8" fill="url(#gBar2)"/><path d="M2.5 5.5H10M2.5 7.5H10M2.5 9.5H10" stroke="#6e7276"/></svg>
<div id="t29" class="t" style="left:175.5px;top:354.00px;height:16px;line-height:16px;font-size:11.6px;color:#0c0c0c;white-space:pre;letter-spacing:0.048px;">«table» customers</div>
<svg class="i" style="left:133px;top:378px;" width="9" height="9" viewBox="0 0 9 9"><rect x=".5" y=".5" width="8" height="8" rx="1" fill="url(#gBox)" stroke="#919191"/><path d="M2 4.5H7 M4.5 2V7" stroke="#26349a" stroke-width="1"/></svg>
<svg class="i" style="left:156px;top:374px;" width="14" height="16" viewBox="0 0 14 16"><rect x=".5" y=".5" width="11" height="12" fill="url(#gTB)" stroke="#2a2a5e"/><rect x="1" y="1" width="10" height="2.8" fill="url(#gBar2)"/><path d="M2.5 5.5H10M2.5 7.5H10M2.5 9.5H10" stroke="#6e7276"/></svg>
<div id="t30" class="t" style="left:175.5px;top:374.00px;height:16px;line-height:16px;font-size:11.6px;color:#0c0c0c;white-space:pre;letter-spacing:-0.122px;">«table» customers_addresses</div>
<svg class="i" style="left:133px;top:398px;" width="9" height="9" viewBox="0 0 9 9"><rect x=".5" y=".5" width="8" height="8" rx="1" fill="url(#gBox)" stroke="#919191"/><path d="M2 4.5H7 M4.5 2V7" stroke="#26349a" stroke-width="1"/></svg>
<svg class="i" style="left:156px;top:394px;" width="14" height="16" viewBox="0 0 14 16"><rect x=".5" y=".5" width="11" height="12" fill="url(#gTB)" stroke="#2a2a5e"/><rect x="1" y="1" width="10" height="2.8" fill="url(#gBar2)"/><path d="M2.5 5.5H10M2.5 7.5H10M2.5 9.5H10" stroke="#6e7276"/></svg>
<div id="t31" class="t" style="left:175.5px;top:394.00px;height:16px;line-height:16px;font-size:11.6px;color:#0c0c0c;white-space:pre;letter-spacing:-0.024px;">«table» customers_orders</div>
<svg class="i" style="left:133px;top:418px;" width="9" height="9" viewBox="0 0 9 9"><rect x=".5" y=".5" width="8" height="8" rx="1" fill="url(#gBox)" stroke="#919191"/><path d="M2 4.5H7 M4.5 2V7" stroke="#26349a" stroke-width="1"/></svg>
<svg class="i" style="left:156px;top:414px;" width="14" height="16" viewBox="0 0 14 16"><rect x=".5" y=".5" width="11" height="12" fill="url(#gTB)" stroke="#2a2a5e"/><rect x="1" y="1" width="10" height="2.8" fill="url(#gBar2)"/><path d="M2.5 5.5H10M2.5 7.5H10M2.5 9.5H10" stroke="#6e7276"/></svg>
<div id="t32" class="t" style="left:175.5px;top:414.00px;height:16px;line-height:16px;font-size:11.6px;color:#0c0c0c;white-space:pre;letter-spacing:-0.024px;">«table» customers_orders_items</div>
<svg class="i" style="left:133px;top:438px;" width="9" height="9" viewBox="0 0 9 9"><rect x=".5" y=".5" width="8" height="8" rx="1" fill="url(#gBox)" stroke="#919191"/><path d="M2 4.5H7 M4.5 2V7" stroke="#26349a" stroke-width="1"/></svg>
<svg class="i" style="left:156px;top:434px;" width="14" height="16" viewBox="0 0 14 16"><rect x=".5" y=".5" width="11" height="12" fill="url(#gTB)" stroke="#2a2a5e"/><rect x="1" y="1" width="10" height="2.8" fill="url(#gBar2)"/><path d="M2.5 5.5H10M2.5 7.5H10M2.5 9.5H10" stroke="#6e7276"/></svg>
<div id="t33" class="t" style="left:175.5px;top:434.00px;height:16px;line-height:16px;font-size:11.6px;color:#0c0c0c;white-space:pre;letter-spacing:-0.099px;">«table» customers_orders_statuses</div>
<svg class="i" style="left:133px;top:458px;" width="9" height="9" viewBox="0 0 9 9"><rect x=".5" y=".5" width="8" height="8" rx="1" fill="url(#gBox)" stroke="#919191"/><path d="M2 4.5H7 M4.5 2V7" stroke="#26349a" stroke-width="1"/></svg>
<svg class="i" style="left:156px;top:454px;" width="14" height="16" viewBox="0 0 14 16"><rect x=".5" y=".5" width="11" height="12" fill="url(#gTB)" stroke="#2a2a5e"/><rect x="1" y="1" width="10" height="2.8" fill="url(#gBar2)"/><path d="M2.5 5.5H10M2.5 7.5H10M2.5 9.5H10" stroke="#6e7276"/></svg>
<div id="t34" class="t" style="left:175.5px;top:454.00px;height:16px;line-height:16px;font-size:11.6px;color:#0c0c0c;white-space:pre;letter-spacing:0.118px;">«table» products</div>
<svg class="i" style="left:133px;top:478px;" width="9" height="9" viewBox="0 0 9 9"><rect x=".5" y=".5" width="8" height="8" rx="1" fill="url(#gBox)" stroke="#919191"/><path d="M2 4.5H7 M4.5 2V7" stroke="#26349a" stroke-width="1"/></svg>
<svg class="i" style="left:156px;top:474px;" width="14" height="16" viewBox="0 0 14 16"><rect x=".5" y=".5" width="11" height="12" fill="url(#gTB)" stroke="#2a2a5e"/><rect x="1" y="1" width="10" height="2.8" fill="url(#gBar2)"/><path d="M2.5 5.5H10M2.5 7.5H10M2.5 9.5H10" stroke="#6e7276"/></svg>
<div id="t35" class="t" style="left:175.5px;top:474.00px;height:16px;line-height:16px;font-size:11.6px;color:#0c0c0c;white-space:pre;letter-spacing:-0.010px;">«table» suppliers</div>
<svg class="i" style="left:110px;top:498px;" width="9" height="9" viewBox="0 0 9 9"><rect x=".5" y=".5" width="8" height="8" rx="1" fill="url(#gBox)" stroke="#919191"/><path d="M2 4.5H7" stroke="#26349a" stroke-width="1"/></svg>
<svg class="i" style="left:131px;top:494px;" width="16" height="15" viewBox="0 0 16 16"><path d="M1.5 3.5 L2.5 1.5 H7.5 L8.5 3.5 Z" fill="#f6c88c" stroke="#e0922e"/><rect x=".5" y="3.5" width="15" height="11" rx=".6" fill="url(#gFold)" stroke="#e0922e"/></svg>
<div id="t36" class="t" style="left:152.5px;top:494.00px;height:16px;line-height:16px;font-size:11.6px;color:#0c0c0c;white-space:pre;letter-spacing:-0.305px;">Views</div>
<svg class="i" style="left:155px;top:515px;" width="16" height="16" viewBox="0 0 16 16"><path d="M5 3.5H10 M3.5 5V11.5H9" fill="none" stroke="#111" stroke-width="1"/><rect x=".5" y=".5" width="5" height="5" fill="#cdd8f4" stroke="#2a35b0"/><rect x="9.5" y=".5" width="5" height="4" fill="#e8eefc" stroke="#2a35b0"/><rect x="9.5" y="9.5" width="5" height="5" fill="#b8c8f0" stroke="#2a35b0"/></svg>
<div id="t37" class="t" style="left:175.5px;top:514.00px;height:16px;line-height:16px;font-size:11.6px;color:#0c0c0c;white-space:pre;letter-spacing:-0.305px;">Views</div>
<svg class="i" style="left:155px;top:534px;" width="16" height="16" viewBox="0 0 16 16"><rect x="1.5" y=".5" width="11" height="12" fill="#cfe2fb" stroke="#2a2a5e"/><rect x="2" y="1" width="10" height="2.8" fill="url(#gBar2)"/><rect x="2" y="3.8" width="10" height="1.6" fill="#fff"/><rect x=".2" y="5.4" width="13.6" height="2" rx="1" fill="#000"/><rect x="1.4" y="5.4" width="5.2" height="4.6" rx="1.3" fill="#000"/><rect x="7.4" y="5.4" width="5.2" height="4.6" rx="1.3" fill="#000"/><rect x="2.6" y="6.6" width="2.8" height="2" fill="#fff"/><rect x="8.6" y="6.6" width="2.8" height="2" fill="#fff"/><rect x="2" y="10.2" width="10" height="1.8" fill="#8cc0f8"/></svg>
<div id="t38" class="t" style="left:175.5px;top:534.00px;height:16px;line-height:16px;font-size:11.6px;color:#0c0c0c;white-space:pre;letter-spacing:-0.001px;">«view» vwCustomerAddresses</div>
<svg class="i" style="left:155px;top:554px;" width="16" height="16" viewBox="0 0 16 16"><rect x="1.5" y=".5" width="11" height="12" fill="#cfe2fb" stroke="#2a2a5e"/><rect x="2" y="1" width="10" height="2.8" fill="url(#gBar2)"/><rect x="2" y="3.8" width="10" height="1.6" fill="#fff"/><rect x=".2" y="5.4" width="13.6" height="2" rx="1" fill="#000"/><rect x="1.4" y="5.4" width="5.2" height="4.6" rx="1.3" fill="#000"/><rect x="7.4" y="5.4" width="5.2" height="4.6" rx="1.3" fill="#000"/><rect x="2.6" y="6.6" width="2.8" height="2" fill="#fff"/><rect x="8.6" y="6.6" width="2.8" height="2" fill="#fff"/><rect x="2" y="10.2" width="10" height="1.8" fill="#8cc0f8"/></svg>
<div id="t39" class="t" style="left:175.5px;top:554.00px;height:16px;line-height:16px;font-size:11.6px;color:#0c0c0c;white-space:pre;letter-spacing:0.001px;">«view» vwCustomerOrderStatuses</div>
<svg class="i" style="left:155px;top:574px;" width="16" height="16" viewBox="0 0 16 16"><rect x="1.5" y=".5" width="11" height="12" fill="#cfe2fb" stroke="#2a2a5e"/><rect x="2" y="1" width="10" height="2.8" fill="url(#gBar2)"/><rect x="2" y="3.8" width="10" height="1.6" fill="#fff"/><rect x=".2" y="5.4" width="13.6" height="2" rx="1" fill="#000"/><rect x="1.4" y="5.4" width="5.2" height="4.6" rx="1.3" fill="#000"/><rect x="7.4" y="5.4" width="5.2" height="4.6" rx="1.3" fill="#000"/><rect x="2.6" y="6.6" width="2.8" height="2" fill="#fff"/><rect x="8.6" y="6.6" width="2.8" height="2" fill="#fff"/><rect x="2" y="10.2" width="10" height="1.8" fill="#8cc0f8"/></svg>
<div id="t40" class="t" style="left:175.5px;top:574.00px;height:16px;line-height:16px;font-size:11.6px;color:#0c0c0c;white-space:pre;letter-spacing:0.000px;width:182.5px;overflow:hidden;"><span>«view» vwCustomerOrders_AllDeta</span>ils</div>
<svg class="i" style="left:131px;top:593px;" width="17" height="16" viewBox="0 0 17 16"><path d="M7 14.5 H11.5 V11" fill="none" stroke="#1a9a3a" stroke-width="1.1"/><rect x=".5" y="7.5" width="7.5" height="5.5" rx=".8" fill="#6a9cf4" stroke="#3a64c8" stroke-width=".8"/><ellipse cx="4.2" cy="14.7" rx="3.6" ry="1.1" fill="#c8d4e8" stroke="#9aa4b8" stroke-width=".5"/><path d="M8.5 2.5 V9.5 C8.5 11.8 15.5 11.8 15.5 9.5 V2.5 Z" fill="url(#gCylO)" stroke="#a8521e"/><ellipse cx="12" cy="2.5" rx="3.5" ry="1.5" fill="#fbd9bd" stroke="#b8622c"/><path d="M8.5 5 C8.5 6.8 15.5 6.8 15.5 5 M8.5 7.4 C8.5 9.2 15.5 9.2 15.5 7.4" fill="none" stroke="#a8521e" stroke-width=".8"/></svg>
<div id="t41" class="t" style="left:152.5px;top:594.00px;height:16px;line-height:16px;font-size:11.6px;color:#0c0c0c;white-space:pre;letter-spacing:0.057px;">«database connection» orders (dev)</div>
<svg class="i" style="left:131px;top:613px;" width="17" height="16" viewBox="0 0 17 16"><path d="M7 14.5 H11.5 V11" fill="none" stroke="#1a9a3a" stroke-width="1.1"/><rect x=".5" y="7.5" width="7.5" height="5.5" rx=".8" fill="#6a9cf4" stroke="#3a64c8" stroke-width=".8"/><ellipse cx="4.2" cy="14.7" rx="3.6" ry="1.1" fill="#c8d4e8" stroke="#9aa4b8" stroke-width=".5"/><path d="M8.5 2.5 V9.5 C8.5 11.8 15.5 11.8 15.5 9.5 V2.5 Z" fill="url(#gCylO)" stroke="#a8521e"/><ellipse cx="12" cy="2.5" rx="3.5" ry="1.5" fill="#fbd9bd" stroke="#b8622c"/><path d="M8.5 5 C8.5 6.8 15.5 6.8 15.5 5 M8.5 7.4 C8.5 9.2 15.5 9.2 15.5 7.4" fill="none" stroke="#a8521e" stroke-width=".8"/></svg>
<div id="t42" class="t" style="left:152.5px;top:614.00px;height:16px;line-height:16px;font-size:11.6px;color:#0c0c0c;white-space:pre;letter-spacing:0.099px;">«database connection» orders (prod)</div>
<svg class="i" style="left:131px;top:633px;" width="17" height="16" viewBox="0 0 17 16"><path d="M7 14.5 H11.5 V11" fill="none" stroke="#1a9a3a" stroke-width="1.1"/><rect x=".5" y="7.5" width="7.5" height="5.5" rx=".8" fill="#6a9cf4" stroke="#3a64c8" stroke-width=".8"/><ellipse cx="4.2" cy="14.7" rx="3.6" ry="1.1" fill="#c8d4e8" stroke="#9aa4b8" stroke-width=".5"/><path d="M8.5 2.5 V9.5 C8.5 11.8 15.5 11.8 15.5 9.5 V2.5 Z" fill="url(#gCylO)" stroke="#a8521e"/><ellipse cx="12" cy="2.5" rx="3.5" ry="1.5" fill="#fbd9bd" stroke="#b8622c"/><path d="M8.5 5 C8.5 6.8 15.5 6.8 15.5 5 M8.5 7.4 C8.5 9.2 15.5 9.2 15.5 7.4" fill="none" stroke="#a8521e" stroke-width=".8"/></svg>
<div id="t43" class="t" style="left:152.5px;top:634.00px;height:16px;line-height:16px;font-size:11.6px;color:#0c0c0c;white-space:pre;letter-spacing:0.074px;">«database connection» orders (uat)</div>
<svg class="i" style="left:110px;top:654px;" width="14" height="16" viewBox="0 0 14 16"><path d="M.5 .5 H9 L12.5 4 V14.5 H.5 Z" fill="#e8f0ff" stroke="#6a8ad8"/><path d="M9 .5 V4 H12.5" fill="#fff" stroke="#6a8ad8"/><path d="M2.5 4.5H7 M2.5 6.5H10 M2.5 8.5H10 M2.5 10.5H10 M2.5 12.5H8" stroke="#7fa0e0"/></svg>
<div id="t44" class="t" style="left:129px;top:654.00px;height:16px;line-height:16px;font-size:11.6px;color:#0c0c0c;white-space:pre;letter-spacing:-0.059px;width:229px;overflow:hidden;"><span>«EAReportSpecification» «Database» Postgr</span>es</div>
<svg class="i" style="left:41px;top:678px;" width="9" height="9" viewBox="0 0 9 9"><rect x=".5" y=".5" width="8" height="8" rx="1" fill="url(#gBox)" stroke="#919191"/><path d="M2 4.5H7 M4.5 2V7" stroke="#26349a" stroke-width="1"/></svg>
<svg class="i" style="left:62px;top:674px;" width="16" height="15" viewBox="0 0 16 16"><path d="M1.5 3.5 L2.5 1.5 H7.5 L8.5 3.5 Z" fill="#f6c88c" stroke="#e0922e"/><rect x=".5" y="3.5" width="15" height="11" rx=".6" fill="url(#gFold)" stroke="#e0922e"/></svg>
<div id="t45" class="t" style="left:83px;top:674.00px;height:16px;line-height:16px;font-size:11.6px;color:#0c0c0c;white-space:pre;letter-spacing:-0.223px;">Example2</div>
<div style="left:32px;top:688px;width:326px;height:1px;background:#fff;"></div>
<div id="t46" class="t" style="left:35.5px;top:698.00px;height:26px;line-height:26px;font-size:18.4px;color:#0c0c0c;white-space:pre;letter-spacing:0.266px;">Tagged Values</div>
<svg class="i" style="left:328px;top:709px" width="10" height="5" viewBox="0 0 10 5"><path d="M0 0H10L5 5Z" fill="#686868"/></svg>
<svg class="i" style="left:345px;top:706px" width="9" height="10" viewBox="0 0 9 10"><path d="M2.5 .5H6V5.5H2.5Z" fill="none" stroke="#686868"/><path d="M5.5 .5V5.5" stroke="#686868" stroke-width="1.6"/><path d="M.8 5.5H8M4.5 5.5V9.5" fill="none" stroke="#686868" stroke-width="1.1"/></svg>
<svg class="i" style="left:362px;top:707px" width="8" height="8" viewBox="0 0 8 8"><path d="M.6 .6L7.4 7.4M7.4 .6L.6 7.4" stroke="#686868" stroke-width="1.4"/></svg>
<div style="left:34px;top:730px;width:20px;height:20px;background:#cbdef6;"></div>
<svg class="i" style="left:37px;top:732px" width="15" height="15" viewBox="0 0 15 15"><rect x=".5" y=".5" width="5" height="5" fill="#fff" stroke="#1a2a7a"/><rect x=".5" y="8.5" width="5" height="5" fill="#fff" stroke="#1a2a7a"/><path d="M1.5 3H4.5M3 1.5V4.5M1.5 11H4.5M3 9.5V12.5" stroke="#1a2a7a"/><path d="M7 1.5H14M7 3.5H12M7 5.5H14M7 9.5H14M7 11.5H12M7 13.5H14" stroke="#333"/></svg>
<div id="t47" class="t" style="left:59px;top:729.00px;height:13px;line-height:13px;font-size:9.5px;color:#000;white-space:pre;">A</div>
<div id="t48" class="t" style="left:59.5px;top:737.00px;height:13px;line-height:13px;font-size:9.5px;color:#000;white-space:pre;">Z</div>
<svg class="i" style="left:67px;top:732px" width="6" height="15" viewBox="0 0 6 15"><path d="M3 0V4" stroke="#0a7a4a" stroke-width="1" stroke-dasharray="1 1"/><path d="M3 4V13" stroke="#0a7a4a" stroke-width="1"/><path d="M.3 10.5L3 14.5L5.7 10.5Z" fill="#0a7a4a"/></svg>
<svg class="i" style="left:81px;top:732px" width="16" height="16" viewBox="0 0 16 16"><path d="M1 8L7 2.5L12 3.5L12.5 8.5L6.5 14Z" fill="#d8e6fb" stroke="#3a6ac8"/><circle cx="10" cy="5.8" r="1" fill="#fff" stroke="#3a6ac8" stroke-width=".7"/></svg>
<svg class="i" style="left:89px;top:731px;" width="8" height="8" viewBox="0 0 8 8"><path d="M4 0 L5 1.8 L7 1 L6.3 3 L8 4 L6.3 5 L7 7 L5 6.2 L4 8 L3 6.2 L1 7 L1.7 5 L0 4 L1.7 3 L1 1 L3 1.8 Z" fill="#f4e01a" stroke="#a89410" stroke-width=".7"/><circle cx="4" cy="4" r="1.8" fill="#fffbd8"/></svg>
<svg class="i" style="left:102px;top:733px" width="16" height="15" viewBox="0 0 16 15"><rect x=".5" y="1.5" width="11" height="12" fill="#f2f3fb" stroke="#b8bce0"/><path d="M2.5 4.5H9M2.5 6.5H9M2.5 8.5H7" stroke="#b8bce0"/><path d="M6.5 11.5L7.5 8.5L13.5 2L15 3.5L9 10Z" fill="#c8cce8" stroke="#a8aed8" stroke-width=".7"/></svg>
<svg class="i" style="left:126px;top:734px" width="13" height="12" viewBox="0 0 13 12"><path d="M1 1L12 11M12 1L1 11" stroke="#e05a5a" stroke-width="1.5"/></svg>
<div style="left:147px;top:729px;width:1px;height:21px;background:#c9c9c9;"></div>
<svg class="i" style="left:155px;top:732px" width="14" height="16" viewBox="0 0 14 16"><path d="M.8 5.5L5 1.5L10 2.5L12.5 8L8 12.5Z" fill="#d8e6fb" stroke="#3a6ac8"/><path d="M1.5 8L8 14.5L12.5 10M1.5 10L8 16" stroke="#3a6ac8" fill="none" stroke-width=".9"/><circle cx="5" cy="4.5" r=".9" fill="#fff" stroke="#3a6ac8" stroke-width=".6"/></svg>
<svg class="i" style="left:176px;top:732px" width="14" height="16" viewBox="0 0 14 16"><path d="M0 2H5M0 7H5M0 12H5" stroke="#7a8a9a" stroke-width="2.2"/><path d="M7 2.5L9 4.5L12.5 .5M7 12.5L9 14.5L12.5 10.5" stroke="#222" fill="none" stroke-width="1.1"/><path d="M7.5 6L11.5 9.5M11.5 6L7.5 9.5" stroke="#222" stroke-width="1.1"/></svg>
<svg class="i" style="left:198px;top:733px;" width="16" height="16" viewBox="0 0 16 16"><circle cx="8" cy="8" r="7" fill="url(#gHelp)" stroke="#4a45b8"/><circle cx="8" cy="8" r="5" fill="none" stroke="#d8d6fa" stroke-width=".9"/><path d="M6.2 6.4 C6.2 4.2 9.9 4.2 9.9 6.3 C9.9 7.6 8 7.6 8 9.2" fill="none" stroke="#eceaff" stroke-width="1.3"/><rect x="7.3" y="10.3" width="1.4" height="1.4" fill="#eceaff"/></svg>
<div style="left:31px;top:752px;width:345px;height:281px;background:#fff;border:1px solid #c4c4c4;box-sizing:border-box;"></div>
<div style="left:32px;top:753px;width:343px;height:18px;background:#f6f6f6;"></div>
<div style="left:32px;top:771px;width:18px;height:51px;background:#f6f6f6;"></div>
<div style="left:32px;top:771px;width:343px;height:1px;background:#f0f0f0;"></div>
<div style="left:32px;top:788px;width:343px;height:1px;background:#f0f0f0;"></div>
<div style="left:32px;top:805px;width:343px;height:1px;background:#f0f0f0;"></div>
<div style="left:32px;top:822px;width:343px;height:1px;background:#f0f0f0;"></div>
<div style="left:169px;top:771px;width:1px;height:201px;background:#f2f2f2;"></div>
<svg class="i" style="left:38px;top:757px" width="8" height="8" viewBox="0 0 8 8"><path d="M7.5 .5V7.5H.5Z" fill="#cbcbcb"/></svg>
<div id="t49" class="t" style="left:53.5px;top:754.00px;height:17px;line-height:17px;font-size:11.8px;color:#111;white-space:pre;font-weight:bold;letter-spacing:-0.080px;">table (customers_orders_statuses)</div>
<div id="t50" class="t" style="left:54px;top:771.00px;height:17px;line-height:17px;font-size:11.8px;color:#222;white-space:pre;letter-spacing:-0.844px;">DBVersion</div>
<div id="t51" class="t" style="left:54px;top:788.00px;height:17px;line-height:17px;font-size:11.8px;color:#222;white-space:pre;letter-spacing:-0.938px;">Owner</div>
<div id="t52" class="t" style="left:173px;top:788.00px;height:17px;line-height:17px;font-size:11.8px;color:#222;white-space:pre;letter-spacing:-0.566px;">public</div>
<div id="t53" class="t" style="left:54px;top:805.00px;height:17px;line-height:17px;font-size:11.8px;color:#222;white-space:pre;letter-spacing:-0.521px;">Tablespace</div>
<div style="left:32px;top:972px;width:343px;height:60px;background:#f1f1f1;"></div>
<div style="left:33px;top:976px;width:341px;height:55px;background:#fafafa;border:1px solid #d2d2d2;box-sizing:border-box;"></div>
<svg class="i" style="left:35px;top:1036px" width="17" height="15" viewBox="0 0 17 15"><rect x=".5" y="3.5" width="11" height="10" fill="#fff" stroke="#1a3a9a"/><path d="M2 9L4 11M4 9L2 11M6 10L7.5 11.5L10 8.5" stroke="#1a3a9a" fill="none" stroke-width=".9"/><path d="M2 6L6 1.5L10 2L14.5 .8L13 4L8 6.5Z" fill="#d8cc4a" stroke="#7a6a10" stroke-width=".8"/><path d="M15.5 0V5" stroke="#111" stroke-width="1.4"/></svg>
<div id="t54" class="t" style="left:53px;top:1036.00px;height:16px;line-height:16px;font-size:11.6px;color:#0c0c0c;white-space:pre;letter-spacing:-0.094px;">Properties</div>
<div style="left:112px;top:1033px;width:103px;height:22px;background:#fff;border:1px solid #cfcfcf;box-sizing:border-box;"></div>
<svg class="i" style="left:118px;top:1036px" width="13" height="15" viewBox="0 0 13 15"><path d="M.8 5L4.5 1.5L9 2.5L11.5 7.5L7.5 11.5Z" fill="#d8e6fb" stroke="#3a6ac8"/><path d="M1.5 7.5L7.5 13.5L11.5 9.5M1.5 9.5L7.5 15" stroke="#3a6ac8" fill="none" stroke-width=".9"/></svg>
<div id="t55" class="t" style="left:134px;top:1035.00px;height:16px;line-height:16px;font-size:11.6px;color:#1a2a60;white-space:pre;letter-spacing:-0.155px;">Tagged Values</div>
<div style="left:0px;top:1056px;width:1920px;height:24px;background:#2b579a;"></div>
<div id="t56" class="t" style="left:2px;top:1060.00px;height:16px;line-height:16px;font-size:11.6px;color:#fff;white-space:pre;letter-spacing:-0.242px;">Line: 4 Column: 1</div>
<div style="left:1604px;top:1068px;width:6px;height:1px;background:#dfe6f2;"></div>
<div style="left:1619px;top:1060px;width:6px;height:15px;background:#d4d4d4;border:1px solid #b0b0b0;box-sizing:border-box;"></div>
<div style="left:1625px;top:1068px;width:84px;height:1px;background:#e8ecf4;"></div>
<div id="t57" class="t" style="left:1719px;top:1060.00px;height:16px;line-height:16px;font-size:11.6px;color:#fff;white-space:pre;letter-spacing:0.219px;">+</div>
<div id="t58" class="t" style="left:1741px;top:1060.00px;height:16px;line-height:16px;font-size:11.5px;color:#9db3d6;white-space:pre;letter-spacing:-1.328px;">CAP</div>
<div id="t59" class="t" style="left:1780px;top:1060.00px;height:16px;line-height:16px;font-size:11.5px;color:#fff;white-space:pre;letter-spacing:-0.102px;">NUM</div>
<div id="t60" class="t" style="left:1826px;top:1060.00px;height:16px;line-height:16px;font-size:11.5px;color:#9db3d6;white-space:pre;letter-spacing:-1.896px;">SCRL</div>
<div id="t61" class="t" style="left:1871px;top:1060.00px;height:16px;line-height:16px;font-size:11.5px;color:#fff;white-space:pre;letter-spacing:-0.816px;">CLOUD</div>
<div style="left:380px;top:72px;width:1509px;height:1px;background:#a0a0a0;"></div>
<div style="left:380px;top:72px;width:1px;height:984px;background:#a0a0a0;"></div>
<div style="left:1888px;top:72px;width:1px;height:984px;background:#a0a0a0;"></div>
<div style="left:381px;top:99px;width:1507px;height:1px;background:#a0a0a0;"></div>
<div style="left:381px;top:100px;width:1507px;height:1px;background:#e2e2e2;"></div>
<svg class="i" style="left:388px;top:83px" width="10" height="9" viewBox="0 0 10 9"><path d="M.6 .5L4.4 4.5L.6 8.5M5.1 .5L8.9 4.5L5.1 8.5" fill="none" stroke="#8c8c8c" stroke-width="1.4"/></svg>
<div id="t62" class="t" style="left:442.5px;top:79.00px;height:17px;line-height:17px;font-size:11.8px;color:#6d6d6d;white-space:pre;letter-spacing:-0.667px;">Database Builder</div>
<svg class="i" style="left:1822px;top:82px" width="10" height="10" viewBox="0 0 10 10"><path d="M.5 4.5L5 .5L9.5 4.5M.5 9L5 5L9.5 9" fill="none" stroke="#9a9a9a" stroke-width="1.1"/></svg>
<svg class="i" style="left:1852px;top:85px" width="8" height="4" viewBox="0 0 8 4"><path d="M0 0H8L4 4Z" fill="#111"/></svg>
<svg class="i" style="left:1873px;top:83px" width="8" height="8" viewBox="0 0 8 8"><path d="M.8 .8L7.2 7.2M7.2 .8L.8 7.2" stroke="#111" stroke-width="1.7"/></svg>
<div style="left:381px;top:121px;width:1507px;height:1px;background:#dadada;"></div>
<div style="left:382px;top:101px;width:135px;height:21px;background:#fff;"></div>
<div style="left:516px;top:101px;width:1px;height:21px;background:#dcdcdc;"></div>
<svg class="i" style="left:386px;top:104px;" width="16" height="16" viewBox="0 0 16 16"><path d="M.8 3.2 V12.4 C.8 15.4 13.2 15.4 13.2 12.4 V3.2 Z" fill="url(#gCylO)" stroke="#b85a24" stroke-width=".8"/><ellipse cx="7" cy="3.2" rx="6.2" ry="2.5" fill="#f6efea" stroke="#c4703a" stroke-width=".8"/><path d="M.8 6.4 C.8 9 13.2 9 13.2 6.4 M.8 9.4 C.8 12 13.2 12 13.2 9.4" fill="none" stroke="#b05420" stroke-width=".7"/><circle cx="10.8" cy="10.8" r="2.5" fill="#e4f4ff" stroke="#4aa2ec" stroke-width="1.1"/><path d="M12.7 12.7 L15.4 15.2" stroke="#1a7ad8" stroke-width="1.8"/></svg>
<div id="t63" class="t" style="left:402.5px;top:104.00px;height:16px;line-height:16px;font-size:11.6px;color:#1f4e9e;white-space:pre;font-weight:bold;letter-spacing:-0.481px;">Database Builder</div>
<svg class="i" style="left:502px;top:107px" width="9" height="9" viewBox="0 0 9 9"><path d="M.7 .7L8.3 8.3M8.3 .7L.7 8.3" stroke="#333" stroke-width="1.2"/></svg>
<svg class="i" style="left:523px;top:104px;" width="16" height="16" viewBox="0 0 16 16"><path d="M5 3.5H10 M3.5 5V11.5H9" fill="none" stroke="#111" stroke-width="1"/><rect x=".5" y=".5" width="5" height="5" fill="#cdd8f4" stroke="#2a35b0"/><rect x="9.5" y=".5" width="5" height="4" fill="#e8eefc" stroke="#2a35b0"/><rect x="9.5" y="9.5" width="5" height="5" fill="#b8c8f0" stroke="#2a35b0"/></svg>
<div id="t64" class="t" style="left:541px;top:104.00px;height:16px;line-height:16px;font-size:11.6px;color:#0c0c0c;white-space:pre;letter-spacing:-0.080px;">Orders - All Objects</div>
<svg class="i" style="left:1858px;top:106px" width="6" height="10" viewBox="0 0 6 10"><path d="M5.5 .8V9.2L.8 5Z" fill="none" stroke="#888" stroke-width=".9"/></svg>
<svg class="i" style="left:1876px;top:106px" width="6" height="10" viewBox="0 0 6 10"><path d="M.5 .8V9.2L5.2 5Z" fill="none" stroke="#888" stroke-width=".9"/></svg>
<div style="left:381px;top:122px;width:276px;height:933px;background:#fff;"></div>
<div style="left:381px;top:142px;width:276px;height:20px;background:#e6e6e6;"></div>
<div style="left:659px;top:583px;width:2px;height:1px;background:#dcdcdc;"></div>
<div style="left:659px;top:586px;width:2px;height:1px;background:#dcdcdc;"></div>
<div style="left:659px;top:589px;width:2px;height:1px;background:#dcdcdc;"></div>
<div style="left:659px;top:592px;width:2px;height:1px;background:#dcdcdc;"></div>
<svg class="i" style="left:401px;top:124px;" width="15" height="16" viewBox="0 0 16 16"><path d="M1 3 V12.8 C1 15.8 14 15.8 14 12.8 V3 Z" fill="url(#gCylG)" stroke="#6a6a6a" stroke-width=".8"/><ellipse cx="7.5" cy="3" rx="6.5" ry="2.4" fill="#ededed" stroke="#7a7a7a" stroke-width=".8"/><path d="M1 6.3 C1 9.1 14 9.1 14 6.3 M1 9.6 C1 12.4 14 12.4 14 9.6" fill="none" stroke="#666" stroke-width=".8"/></svg>
<div id="t65" class="t" style="left:421.5px;top:124.00px;height:16px;line-height:16px;font-size:11.6px;color:#0c0c0c;white-space:pre;letter-spacing:-0.131px;">Oracle</div>
<svg class="i" style="left:387px;top:148px;" width="9" height="9" viewBox="0 0 9 9"><rect x=".5" y=".5" width="8" height="8" rx="1" fill="url(#gBox)" stroke="#919191"/><path d="M2 4.5H7" stroke="#26349a" stroke-width="1"/></svg>
<svg class="i" style="left:401px;top:144px;" width="15" height="16" viewBox="0 0 16 16"><path d="M1 3 V12.8 C1 15.8 14 15.8 14 12.8 V3 Z" fill="url(#gCylO)" stroke="#b85a24" stroke-width=".8"/><ellipse cx="7.5" cy="3" rx="6.5" ry="2.4" fill="#fde4d0" stroke="#c06a34" stroke-width=".8"/><path d="M1 6.3 C1 9.1 14 9.1 14 6.3 M1 9.6 C1 12.4 14 12.4 14 9.6" fill="none" stroke="#b05420" stroke-width=".8"/></svg>
<div id="t66" class="t" style="left:421.5px;top:144.00px;height:16px;line-height:16px;font-size:11.6px;color:#0c0c0c;white-space:pre;letter-spacing:-0.053px;">Orders (postgres)</div>
<svg class="i" style="left:404px;top:168px;" width="9" height="9" viewBox="0 0 9 9"><rect x=".5" y=".5" width="8" height="8" rx="1" fill="url(#gBox)" stroke="#919191"/><path d="M2 4.5H7" stroke="#26349a" stroke-width="1"/></svg>
<svg class="i" style="left:417px;top:164px;" width="17" height="17" viewBox="0 0 17 17"><path d="M1.5 2.5 L2.5 .8 H7 L8 2.5 Z" fill="#e6c25c" stroke="#b48a2c"/><rect x=".5" y="2.5" width="12" height="9" rx="1" fill="url(#gYF)" stroke="#b48a2c"/></svg>
<svg class="i" style="left:425px;top:171px;" width="8" height="9" viewBox="0 0 8 9"><rect x=".5" y=".5" width="7" height="8" fill="#fff" stroke="#1a2266"/><rect x="1" y="1" width="6" height="2" fill="#2a5ac8"/><path d="M2 4.5H6 M2 6.5H6" stroke="#5f83c4"/></svg>
<div id="t67" class="t" style="left:438.5px;top:164.00px;height:16px;line-height:16px;font-size:11.6px;color:#0c0c0c;white-space:pre;letter-spacing:-0.003px;">Tables</div>
<svg class="i" style="left:435px;top:185px;" width="14" height="16" viewBox="0 0 14 16"><rect x=".5" y=".5" width="11" height="12" fill="url(#gTB)" stroke="#2a2a5e"/><rect x="1" y="1" width="10" height="2.8" fill="url(#gBar2)"/><path d="M2.5 5.5H10M2.5 7.5H10M2.5 9.5H10" stroke="#6e7276"/></svg>
<div id="t68" class="t" style="left:455.5px;top:184.00px;height:16px;line-height:16px;font-size:11.6px;color:#0c0c0c;white-space:pre;letter-spacing:0.233px;">public.customers</div>
<svg class="i" style="left:421px;top:208px;" width="9" height="9" viewBox="0 0 9 9"><rect x=".5" y=".5" width="8" height="8" rx="1" fill="url(#gBox)" stroke="#919191"/><path d="M2 4.5H7 M4.5 2V7" stroke="#26349a" stroke-width="1"/></svg>
<svg class="i" style="left:435px;top:205px;" width="14" height="16" viewBox="0 0 14 16"><rect x=".5" y=".5" width="11" height="12" fill="url(#gTB)" stroke="#2a2a5e"/><rect x="1" y="1" width="10" height="2.8" fill="url(#gBar2)"/><path d="M2.5 5.5H10M2.5 7.5H10M2.5 9.5H10" stroke="#6e7276"/></svg>
<div id="t69" class="t" style="left:455.5px;top:204.00px;height:16px;line-height:16px;font-size:11.6px;color:#0c0c0c;white-space:pre;letter-spacing:-0.018px;">public.customers_addresses</div>
<svg class="i" style="left:421px;top:228px;" width="9" height="9" viewBox="0 0 9 9"><rect x=".5" y=".5" width="8" height="8" rx="1" fill="url(#gBox)" stroke="#919191"/><path d="M2 4.5H7 M4.5 2V7" stroke="#26349a" stroke-width="1"/></svg>
<svg class="i" style="left:435px;top:225px;" width="14" height="16" viewBox="0 0 14 16"><rect x=".5" y=".5" width="11" height="12" fill="url(#gTB)" stroke="#2a2a5e"/><rect x="1" y="1" width="10" height="2.8" fill="url(#gBar2)"/><path d="M2.5 5.5H10M2.5 7.5H10M2.5 9.5H10" stroke="#6e7276"/></svg>
<div id="t70" class="t" style="left:455.5px;top:224.00px;height:16px;line-height:16px;font-size:11.6px;color:#0c0c0c;white-space:pre;letter-spacing:0.099px;">public.customers_orders</div>
<svg class="i" style="left:421px;top:248px;" width="9" height="9" viewBox="0 0 9 9"><rect x=".5" y=".5" width="8" height="8" rx="1" fill="url(#gBox)" stroke="#919191"/><path d="M2 4.5H7 M4.5 2V7" stroke="#26349a" stroke-width="1"/></svg>
<svg class="i" style="left:435px;top:245px;" width="14" height="16" viewBox="0 0 14 16"><rect x=".5" y=".5" width="11" height="12" fill="url(#gTB)" stroke="#2a2a5e"/><rect x="1" y="1" width="10" height="2.8" fill="url(#gBar2)"/><path d="M2.5 5.5H10M2.5 7.5H10M2.5 9.5H10" stroke="#6e7276"/></svg>
<div id="t71" class="t" style="left:455.5px;top:244.00px;height:16px;line-height:16px;font-size:11.6px;color:#0c0c0c;white-space:pre;letter-spacing:0.073px;">public.customers_orders_items</div>
<svg class="i" style="left:421px;top:268px;" width="9" height="9" viewBox="0 0 9 9"><rect x=".5" y=".5" width="8" height="8" rx="1" fill="url(#gBox)" stroke="#919191"/><path d="M2 4.5H7 M4.5 2V7" stroke="#26349a" stroke-width="1"/></svg>
<svg class="i" style="left:435px;top:265px;" width="14" height="16" viewBox="0 0 14 16"><rect x=".5" y=".5" width="11" height="12" fill="url(#gTB)" stroke="#2a2a5e"/><rect x="1" y="1" width="10" height="2.8" fill="url(#gBar2)"/><path d="M2.5 5.5H10M2.5 7.5H10M2.5 9.5H10" stroke="#6e7276"/></svg>
<div id="t72" class="t" style="left:455.5px;top:264.00px;height:16px;line-height:16px;font-size:11.6px;color:#0c0c0c;white-space:pre;letter-spacing:-0.014px;">public.customers_orders_statuses</div>
<svg class="i" style="left:421px;top:288px;" width="9" height="9" viewBox="0 0 9 9"><rect x=".5" y=".5" width="8" height="8" rx="1" fill="url(#gBox)" stroke="#919191"/><path d="M2 4.5H7 M4.5 2V7" stroke="#26349a" stroke-width="1"/></svg>
<svg class="i" style="left:435px;top:285px;" width="14" height="16" viewBox="0 0 14 16"><rect x=".5" y=".5" width="11" height="12" fill="url(#gTB)" stroke="#2a2a5e"/><rect x="1" y="1" width="10" height="2.8" fill="url(#gBar2)"/><path d="M2.5 5.5H10M2.5 7.5H10M2.5 9.5H10" stroke="#6e7276"/></svg>
<div id="t73" class="t" style="left:455.5px;top:284.00px;height:16px;line-height:16px;font-size:11.6px;color:#0c0c0c;white-space:pre;letter-spacing:0.323px;">public.products</div>
<svg class="i" style="left:435px;top:305px;" width="14" height="16" viewBox="0 0 14 16"><rect x=".5" y=".5" width="11" height="12" fill="url(#gTB)" stroke="#2a2a5e"/><rect x="1" y="1" width="10" height="2.8" fill="url(#gBar2)"/><path d="M2.5 5.5H10M2.5 7.5H10M2.5 9.5H10" stroke="#6e7276"/></svg>
<div id="t74" class="t" style="left:455.5px;top:304.00px;height:16px;line-height:16px;font-size:11.6px;color:#0c0c0c;white-space:pre;letter-spacing:0.172px;">public.suppliers</div>
<svg class="i" style="left:404px;top:328px;" width="9" height="9" viewBox="0 0 9 9"><rect x=".5" y=".5" width="8" height="8" rx="1" fill="url(#gBox)" stroke="#919191"/><path d="M2 4.5H7" stroke="#26349a" stroke-width="1"/></svg>
<svg class="i" style="left:417px;top:324px;" width="17" height="17" viewBox="0 0 17 17"><path d="M1.5 2.5 L2.5 .8 H7 L8 2.5 Z" fill="#e6c25c" stroke="#b48a2c"/><rect x=".5" y="2.5" width="12" height="9" rx="1" fill="url(#gYF)" stroke="#b48a2c"/></svg>
<svg class="i" style="left:425px;top:331px;" width="8" height="9" viewBox="0 0 8 9"><rect x=".5" y=".5" width="7" height="8" fill="#cfe0fa" stroke="#1a2266"/><rect x="1" y="1" width="6" height="2" fill="#2a5ac8"/><rect x="0" y="4" width="8" height="3" fill="#111"/><rect x="1.5" y="5" width="2" height="1" fill="#fff"/><rect x="4.5" y="5" width="2" height="1" fill="#fff"/></svg>
<div id="t75" class="t" style="left:438.5px;top:324.00px;height:16px;line-height:16px;font-size:11.6px;color:#0c0c0c;white-space:pre;letter-spacing:-0.305px;">Views</div>
<svg class="i" style="left:434px;top:345px;" width="16" height="16" viewBox="0 0 16 16"><rect x="1.5" y=".5" width="11" height="12" fill="#cfe2fb" stroke="#2a2a5e"/><rect x="2" y="1" width="10" height="2.8" fill="url(#gBar2)"/><rect x="2" y="3.8" width="10" height="1.6" fill="#fff"/><rect x=".2" y="5.4" width="13.6" height="2" rx="1" fill="#000"/><rect x="1.4" y="5.4" width="5.2" height="4.6" rx="1.3" fill="#000"/><rect x="7.4" y="5.4" width="5.2" height="4.6" rx="1.3" fill="#000"/><rect x="2.6" y="6.6" width="2.8" height="2" fill="#fff"/><rect x="8.6" y="6.6" width="2.8" height="2" fill="#fff"/><rect x="2" y="10.2" width="10" height="1.8" fill="#8cc0f8"/></svg>
<div id="t76" class="t" style="left:455.5px;top:344.00px;height:16px;line-height:16px;font-size:11.6px;color:#0c0c0c;white-space:pre;letter-spacing:0.111px;">public.vwCustomerAddresses</div>
<svg class="i" style="left:434px;top:365px;" width="16" height="16" viewBox="0 0 16 16"><rect x="1.5" y=".5" width="11" height="12" fill="#cfe2fb" stroke="#2a2a5e"/><rect x="2" y="1" width="10" height="2.8" fill="url(#gBar2)"/><rect x="2" y="3.8" width="10" height="1.6" fill="#fff"/><rect x=".2" y="5.4" width="13.6" height="2" rx="1" fill="#000"/><rect x="1.4" y="5.4" width="5.2" height="4.6" rx="1.3" fill="#000"/><rect x="7.4" y="5.4" width="5.2" height="4.6" rx="1.3" fill="#000"/><rect x="2.6" y="6.6" width="2.8" height="2" fill="#fff"/><rect x="8.6" y="6.6" width="2.8" height="2" fill="#fff"/><rect x="2" y="10.2" width="10" height="1.8" fill="#8cc0f8"/></svg>
<div id="t77" class="t" style="left:455.5px;top:364.00px;height:16px;line-height:16px;font-size:11.6px;color:#0c0c0c;white-space:pre;letter-spacing:0.102px;">public.vwCustomerOrders_AllDetails</div>
<svg class="i" style="left:434px;top:385px;" width="16" height="16" viewBox="0 0 16 16"><rect x="1.5" y=".5" width="11" height="12" fill="#cfe2fb" stroke="#2a2a5e"/><rect x="2" y="1" width="10" height="2.8" fill="url(#gBar2)"/><rect x="2" y="3.8" width="10" height="1.6" fill="#fff"/><rect x=".2" y="5.4" width="13.6" height="2" rx="1" fill="#000"/><rect x="1.4" y="5.4" width="5.2" height="4.6" rx="1.3" fill="#000"/><rect x="7.4" y="5.4" width="5.2" height="4.6" rx="1.3" fill="#000"/><rect x="2.6" y="6.6" width="2.8" height="2" fill="#fff"/><rect x="8.6" y="6.6" width="2.8" height="2" fill="#fff"/><rect x="2" y="10.2" width="10" height="1.8" fill="#8cc0f8"/></svg>
<div id="t78" class="t" style="left:455.5px;top:384.00px;height:16px;line-height:16px;font-size:11.6px;color:#0c0c0c;white-space:pre;letter-spacing:0.097px;">public.vwCustomerOrderStatuses</div>
<svg class="i" style="left:404px;top:408px;" width="9" height="9" viewBox="0 0 9 9"><rect x=".5" y=".5" width="8" height="8" rx="1" fill="url(#gBox)" stroke="#919191"/><path d="M2 4.5H7" stroke="#26349a" stroke-width="1"/></svg>
<svg class="i" style="left:417px;top:404px;" width="17" height="17" viewBox="0 0 17 17"><path d="M1.5 2.5 L2.5 .8 H7 L8 2.5 Z" fill="#e6c25c" stroke="#b48a2c"/><rect x=".5" y="2.5" width="12" height="9" rx="1" fill="url(#gYF)" stroke="#b48a2c"/></svg>
<svg class="i" style="left:425px;top:411px;" width="8" height="9" viewBox="0 0 8 9"><rect x=".5" y=".5" width="7" height="8" fill="#fff" stroke="#1a2266"/><rect x="1" y="1" width="6" height="1.5" fill="#2a5ac8"/><path d="M2 7.5 L4.5 3.5 M3 5.5H5.5 M4.5 5 L6.5 7.5" stroke="#111" stroke-width=".9" fill="none"/></svg>
<div id="t79" class="t" style="left:438.5px;top:404.00px;height:16px;line-height:16px;font-size:11.6px;color:#0c0c0c;white-space:pre;letter-spacing:0.154px;">Functions</div>
<svg class="i" style="left:435px;top:425px;" width="14" height="16" viewBox="0 0 14 16"><rect x=".5" y=".5" width="11" height="12" fill="#fff" stroke="#2a2a5e"/><rect x="1" y="1" width="10" height="2.2" fill="url(#gBar2)"/><text x="1.8" y="11.3" font-family="Liberation Serif,serif" font-style="italic" font-weight="bold" font-size="10.5" fill="#111" letter-spacing="-.6">fx</text></svg>
<div id="t80" class="t" style="left:455.5px;top:424.00px;height:16px;line-height:16px;font-size:11.6px;color:#0c0c0c;white-space:pre;letter-spacing:0.214px;">public.send_customer_notification</div>
<svg class="i" style="left:417px;top:444px;" width="17" height="17" viewBox="0 0 17 17"><path d="M1.5 2.5 L2.5 .8 H7 L8 2.5 Z" fill="#e6c25c" stroke="#b48a2c"/><rect x=".5" y="2.5" width="12" height="9" rx="1" fill="url(#gYF)" stroke="#b48a2c"/></svg>
<svg class="i" style="left:425px;top:451px;" width="8" height="9" viewBox="0 0 8 9"><rect x=".5" y=".5" width="7" height="8" fill="#fff" stroke="#1a2266"/><rect x="1" y="1" width="6" height="1.5" fill="#2a5ac8"/><path d="M2 4.5 Q3 3.5 4 4.5 L2 7.5 H4 M5.5 4.5 L6.5 6 L5.5 7.5" stroke="#223" stroke-width=".9" fill="none"/></svg>
<div id="t81" class="t" style="left:438.5px;top:444.00px;height:16px;line-height:16px;font-size:11.6px;color:#0c0c0c;white-space:pre;letter-spacing:-0.314px;">Sequences</div>
<svg class="i" style="left:404px;top:468px;" width="9" height="9" viewBox="0 0 9 9"><rect x=".5" y=".5" width="8" height="8" rx="1" fill="url(#gBox)" stroke="#919191"/><path d="M2 4.5H7" stroke="#26349a" stroke-width="1"/></svg>
<svg class="i" style="left:417px;top:464px;" width="17" height="17" viewBox="0 0 17 17"><path d="M1.5 2.5 L2.5 .8 H7 L8 2.5 Z" fill="#e6c25c" stroke="#b48a2c"/><rect x=".5" y="2.5" width="12" height="9" rx="1" fill="url(#gYF)" stroke="#b48a2c"/></svg>
<svg class="i" style="left:425px;top:471px;" width="9" height="9" viewBox="0 0 9 9"><path d="M1.5 .5 H6 L8.5 3 V8.5 H1.5 Z" fill="#dbe6fb" stroke="#5a70c0"/><path d="M0 5.5 H7" stroke="#c0602a" stroke-width="1.6" stroke-dasharray="1.6 .7"/></svg>
<div id="t82" class="t" style="left:438.5px;top:464.00px;height:16px;line-height:16px;font-size:11.6px;color:#0c0c0c;white-space:pre;letter-spacing:-0.185px;">Queries</div>
<svg class="i" style="left:434px;top:485px;" width="15" height="16" viewBox="0 0 15 16"><path d="M3.5 .5 H10 L13.5 4 V14.5 H3.5 Z" fill="#e4ecfc" stroke="#3a55b0"/><path d="M10 .5 V4 H13.5" fill="#fff" stroke="#3a55b0"/><text x="0" y="10.5" font-family="Liberation Sans,sans-serif" font-weight="bold" font-size="7" fill="#7a3a10" letter-spacing="-.3">SQL</text><path d="M5 12.5 H12" stroke="#a8c0f0"/></svg>
<div id="t83" class="t" style="left:455px;top:484.00px;height:16px;line-height:16px;font-size:11.6px;color:#0c0c0c;white-space:pre;letter-spacing:0.071px;">Show Table List</div>
<svg class="i" style="left:404px;top:508px;" width="9" height="9" viewBox="0 0 9 9"><rect x=".5" y=".5" width="8" height="8" rx="1" fill="url(#gBox)" stroke="#919191"/><path d="M2 4.5H7" stroke="#26349a" stroke-width="1"/></svg>
<svg class="i" style="left:417px;top:504px;" width="17" height="17" viewBox="0 0 17 17"><path d="M1.5 2.5 L2.5 .8 H7 L8 2.5 Z" fill="#e6c25c" stroke="#b48a2c"/><rect x=".5" y="2.5" width="12" height="9" rx="1" fill="url(#gYF)" stroke="#b48a2c"/></svg>
<svg class="i" style="left:425px;top:511px;" width="9" height="9" viewBox="0 0 9 9"><rect x=".5" y="3.5" width="4.5" height="3.5" fill="#5a8ef0" stroke="#2a55c0"/><path d="M4.5 1.5 V6.5 C4.5 8 8.5 8 8.5 6.5 V1.5 Z" fill="#e8955a" stroke="#a8521e" stroke-width=".8"/><ellipse cx="6.5" cy="1.5" rx="2" ry="1" fill="#fbd9bd" stroke="#b8622c" stroke-width=".8"/><path d="M1 8.5 H4" stroke="#1a9a3a"/></svg>
<div id="t84" class="t" style="left:438.5px;top:504.00px;height:16px;line-height:16px;font-size:11.6px;color:#0c0c0c;white-space:pre;letter-spacing:0.205px;">Connections</div>
<svg class="i" style="left:434px;top:523px;" width="17" height="16" viewBox="0 0 17 16"><path d="M7 14.5 H11.5 V11" fill="none" stroke="#1a9a3a" stroke-width="1.1"/><rect x=".5" y="7.5" width="7.5" height="5.5" rx=".8" fill="#6a9cf4" stroke="#3a64c8" stroke-width=".8"/><ellipse cx="4.2" cy="14.7" rx="3.6" ry="1.1" fill="#c8d4e8" stroke="#9aa4b8" stroke-width=".5"/><path d="M8.5 2.5 V9.5 C8.5 11.8 15.5 11.8 15.5 9.5 V2.5 Z" fill="url(#gCylO)" stroke="#a8521e"/><ellipse cx="12" cy="2.5" rx="3.5" ry="1.5" fill="#fbd9bd" stroke="#b8622c"/><path d="M8.5 5 C8.5 6.8 15.5 6.8 15.5 5 M8.5 7.4 C8.5 9.2 15.5 9.2 15.5 7.4" fill="none" stroke="#a8521e" stroke-width=".8"/></svg>
<div id="t85" class="t" style="left:455.5px;top:524.00px;height:16px;line-height:16px;font-size:11.6px;color:#0c0c0c;white-space:pre;letter-spacing:0.000px;">orders (dev)</div>
<svg class="i" style="left:434px;top:543px;" width="17" height="16" viewBox="0 0 17 16"><path d="M7 14.5 H11.5 V11" fill="none" stroke="#8a8a8a" stroke-width="1.1"/><rect x=".5" y="7.5" width="7.5" height="5.5" rx=".8" fill="#9a9a9a" stroke="#6a6a6a" stroke-width=".8"/><ellipse cx="4.2" cy="14.7" rx="3.6" ry="1.1" fill="#c8c8c8" stroke="#9aa4b8" stroke-width=".5"/><path d="M8.5 2.5 V9.5 C8.5 11.8 15.5 11.8 15.5 9.5 V2.5 Z" fill="url(#gCylG)" stroke="#666"/><ellipse cx="12" cy="2.5" rx="3.5" ry="1.5" fill="#e8e8e8" stroke="#777"/><path d="M8.5 5 C8.5 6.8 15.5 6.8 15.5 5 M8.5 7.4 C8.5 9.2 15.5 9.2 15.5 7.4" fill="none" stroke="#666" stroke-width=".8"/></svg>
<div id="t86" class="t" style="left:455.5px;top:544.00px;height:16px;line-height:16px;font-size:11.6px;color:#0c0c0c;white-space:pre;letter-spacing:0.124px;">orders (prod)</div>
<svg class="i" style="left:434px;top:563px;" width="17" height="16" viewBox="0 0 17 16"><path d="M7 14.5 H11.5 V11" fill="none" stroke="#8a8a8a" stroke-width="1.1"/><rect x=".5" y="7.5" width="7.5" height="5.5" rx=".8" fill="#9a9a9a" stroke="#6a6a6a" stroke-width=".8"/><ellipse cx="4.2" cy="14.7" rx="3.6" ry="1.1" fill="#c8c8c8" stroke="#9aa4b8" stroke-width=".5"/><path d="M8.5 2.5 V9.5 C8.5 11.8 15.5 11.8 15.5 9.5 V2.5 Z" fill="url(#gCylG)" stroke="#666"/><ellipse cx="12" cy="2.5" rx="3.5" ry="1.5" fill="#e8e8e8" stroke="#777"/><path d="M8.5 5 C8.5 6.8 15.5 6.8 15.5 5 M8.5 7.4 C8.5 9.2 15.5 9.2 15.5 7.4" fill="none" stroke="#666" stroke-width=".8"/></svg>
<div id="t87" class="t" style="left:455.5px;top:564.00px;height:16px;line-height:16px;font-size:11.6px;color:#0c0c0c;white-space:pre;letter-spacing:0.053px;">orders (uat)</div>
<svg class="i" style="left:401px;top:584px;" width="15" height="16" viewBox="0 0 16 16"><path d="M1 3 V12.8 C1 15.8 14 15.8 14 12.8 V3 Z" fill="url(#gCylG)" stroke="#6a6a6a" stroke-width=".8"/><ellipse cx="7.5" cy="3" rx="6.5" ry="2.4" fill="#ededed" stroke="#7a7a7a" stroke-width=".8"/><path d="M1 6.3 C1 9.1 14 9.1 14 6.3 M1 9.6 C1 12.4 14 12.4 14 9.6" fill="none" stroke="#666" stroke-width=".8"/></svg>
<div id="t88" class="t" style="left:421.5px;top:584.00px;height:16px;line-height:16px;font-size:11.6px;color:#0c0c0c;white-space:pre;letter-spacing:-0.304px;">Website_DB</div>
<div style="left:663px;top:143px;width:1225px;height:912px;background:#fff;"></div>
<div style="left:664px;top:144px;width:1222px;height:909px;background:#fafafa;"></div>
<div style="left:663px;top:143px;width:1225px;height:1px;background:#c8c8c8;"></div>
<div style="left:663px;top:143px;width:1px;height:912px;background:#c8c8c8;"></div>
<div style="left:381px;top:1055px;width:1508px;height:1px;background:#b2aeaa;"></div>
<div id="t89" class="t" style="left:669.5px;top:125.00px;height:16px;line-height:16px;font-size:11.6px;color:#0c0c0c;white-space:pre;letter-spacing:-0.208px;">Columns</div>
<div id="t90" class="t" style="left:727.5px;top:125.00px;height:16px;line-height:16px;font-size:11.6px;color:#0c0c0c;white-space:pre;letter-spacing:-0.064px;">Constraints</div>
<div id="t91" class="t" style="left:799.5px;top:125.00px;height:16px;line-height:16px;font-size:11.6px;color:#0c0c0c;white-space:pre;letter-spacing:-0.547px;">SQL Scratch Pad</div>
<div id="t92" class="t" style="left:894.5px;top:125.00px;height:16px;line-height:16px;font-size:11.6px;color:#0c0c0c;white-space:pre;letter-spacing:-0.270px;">Database Compare</div>
<div style="left:998px;top:124px;width:75px;height:20px;background:#fafafa;border:1px solid #c8c8c8;box-sizing:border-box;"></div>
<div style="left:999px;top:143px;width:73px;height:1px;background:#fafafa;"></div>
<div id="t93" class="t" style="left:1004.5px;top:126.00px;height:16px;line-height:16px;font-size:11.6px;color:#1c3a70;white-space:pre;letter-spacing:-0.581px;">Execute DDL</div>
<div id="t94" class="t" style="left:677.5px;top:153.00px;height:17px;line-height:17px;font-size:11.8px;color:#111;white-space:pre;letter-spacing:-0.653px;">Execution Queue:</div>
<div id="t95" class="t" style="left:1080px;top:153.00px;height:17px;line-height:17px;font-size:11.8px;color:#111;white-space:pre;letter-spacing:-0.573px;">Script:</div>
<div style="left:674px;top:173px;width:395px;height:659px;background:#fff;border:1px solid #bdbdbd;box-sizing:border-box;"></div>
<div style="left:676px;top:175px;width:391px;height:22px;background:#f0f0f0;"></div>
<div style="left:676px;top:197px;width:392px;height:1px;background:#a6a6a6;"></div>
<div style="left:676px;top:174px;width:392px;height:1px;background:#e2e2e2;"></div>
<div id="t96" class="t" style="left:681.5px;top:180.00px;height:15px;line-height:15px;font-size:11px;color:#0c0c0c;white-space:pre;letter-spacing:0.241px;">Object</div>
<div style="left:792px;top:176px;width:1px;height:20px;background:#dcdcdc;"></div>
<div id="t97" class="t" style="left:798.5px;top:180.00px;height:15px;line-height:15px;font-size:11px;color:#0c0c0c;white-space:pre;letter-spacing:-0.375px;">Task</div>
<div style="left:948px;top:176px;width:1px;height:20px;background:#dcdcdc;"></div>
<div id="t98" class="t" style="left:954.5px;top:180.00px;height:15px;line-height:15px;font-size:11px;color:#0c0c0c;white-space:pre;letter-spacing:0.484px;">Action</div>
<div style="left:1066px;top:176px;width:1px;height:20px;background:#dcdcdc;"></div>
<div id="t99" class="t" style="left:679.5px;top:200.00px;height:15px;line-height:15px;font-size:11px;color:#0c0c0c;white-space:pre;letter-spacing:0.269px;">public.customers.id</div>
<div id="t100" class="t" style="left:796.5px;top:200.00px;height:15px;line-height:15px;font-size:11px;color:#0c0c0c;white-space:pre;letter-spacing:0.220px;">Column Comment</div>
<div id="t101" class="t" style="left:952.5px;top:200.00px;height:15px;line-height:15px;font-size:11px;color:#0c0c0c;white-space:pre;letter-spacing:0.220px;">Column Comment</div>
<div style="left:1080px;top:173px;width:794px;height:659px;background:#fff;"></div>
<div style="left:1080px;top:173px;width:16px;height:642px;background:#f0f0f0;"></div>
<div id="t102" class="t" style="left:1131px;top:175.00px;height:17px;line-height:17px;font-size:12.4px;color:#2b8a7a;white-space:pre;font-family:'Liberation Mono',monospace;letter-spacing:-0.44px;">1</div>
<div id="t103" class="t" style="left:1142px;top:175.00px;height:17px;line-height:17px;font-size:12.4px;color:#0c0c0c;white-space:pre;font-family:'Liberation Mono',monospace;letter-spacing:-0.44px;"><span style="color:#000">COMMENT</span><span style="color:#000"> </span><span style="color:#0a0af5">ON COLUMN public</span><span style="color:#000">.customers.id </span><span style="color:#0a0af5">IS</span><span style="color:#a31515"> 'The primary key field for ''customers'' table.</span></div>
<div id="t104" class="t" style="left:1131px;top:191.00px;height:17px;line-height:17px;font-size:12.4px;color:#2b8a7a;white-space:pre;font-family:'Liberation Mono',monospace;letter-spacing:-0.44px;">2</div>
<div id="t105" class="t" style="left:1142px;top:191.00px;height:17px;line-height:17px;font-size:12.4px;color:#0c0c0c;white-space:pre;font-family:'Liberation Mono',monospace;letter-spacing:-0.44px;"><span style="color:#a31515">The datatype of BIGSERIAL is a special type in that when the table is generated PostgreSQL</span></div>
<div id="t106" class="t" style="left:1131px;top:207.00px;height:17px;line-height:17px;font-size:12.4px;color:#2b8a7a;white-space:pre;font-family:'Liberation Mono',monospace;letter-spacing:-0.44px;">3</div>
<div id="t107" class="t" style="left:1142px;top:207.00px;height:17px;line-height:17px;font-size:12.4px;color:#0c0c0c;white-space:pre;font-family:'Liberation Mono',monospace;letter-spacing:-0.44px;"><span style="color:#a31515">will automatically create a sequence object that handles the automatically numbering for the</span></div>
<div id="t108" class="t" style="left:1131px;top:223.00px;height:17px;line-height:17px;font-size:12.4px;color:#2b8a7a;white-space:pre;font-family:'Liberation Mono',monospace;letter-spacing:-0.44px;">4</div>
<div id="t109" class="t" style="left:1142px;top:223.00px;height:17px;line-height:17px;font-size:12.4px;color:#0c0c0c;white-space:pre;font-family:'Liberation Mono',monospace;letter-spacing:-0.44px;"><span style="color:#a31515">column.  Within EA the system generated sequence is ignored in both the generation and import. '</span></div>
<div style="left:1857px;top:173px;width:17px;height:642px;background:#e6e6e6;"></div>
<div style="left:1857px;top:173px;width:17px;height:17px;background:#fafafa;border:1px solid #dcdcdc;box-sizing:border-box;"></div>
<svg class="i" style="left:1861px;top:179px" width="9" height="5" viewBox="0 0 9 5"><path d="M0 5H9L4.5 0Z" fill="#777"/></svg>
<div style="left:1857px;top:190px;width:17px;height:568px;background:#fafafa;border:1px solid #dcdcdc;box-sizing:border-box;"></div>
<div style="left:1857px;top:798px;width:17px;height:17px;background:#fafafa;border:1px solid #dcdcdc;box-sizing:border-box;"></div>
<svg class="i" style="left:1861px;top:804px" width="9" height="5" viewBox="0 0 9 5"><path d="M0 0H9L4.5 5Z" fill="#777"/></svg>
<div style="left:1080px;top:815px;width:777px;height:17px;background:#e6e6e6;"></div>
<div style="left:1080px;top:815px;width:17px;height:17px;background:#fafafa;border:1px solid #dcdcdc;box-sizing:border-box;"></div>
<svg class="i" style="left:1086px;top:819px" width="5" height="9" viewBox="0 0 5 9"><path d="M5 0V9L0 4.5Z" fill="#666"/></svg>
<div style="left:1097px;top:815px;width:210px;height:17px;background:#fafafa;border:1px solid #dcdcdc;box-sizing:border-box;"></div>
<div style="left:1840px;top:815px;width:17px;height:17px;background:#fafafa;border:1px solid #dcdcdc;box-sizing:border-box;"></div>
<svg class="i" style="left:1846px;top:819px" width="5" height="9" viewBox="0 0 5 9"><path d="M0 0V9L5 4.5Z" fill="#666"/></svg>
<div style="left:674px;top:840px;width:68px;height:26px;background:#fdfdfd;border:1px solid #b4b4b4;box-sizing:border-box;"></div>
<div id="t110" class="t" style="left:695px;top:845.00px;height:17px;line-height:17px;font-size:11.8px;color:#111;white-space:pre;letter-spacing:-0.964px;">Save</div>
<div style="left:1531px;top:839px;width:129px;height:26px;background:#fdfdfd;border:1px solid #b4b4b4;box-sizing:border-box;"></div>
<div id="t111" class="t" style="left:1547px;top:844.00px;height:17px;line-height:17px;font-size:11.8px;color:#111;white-space:pre;letter-spacing:-0.581px;">Reset Failed Actions</div>
<div style="left:1664px;top:839px;width:68px;height:26px;background:#fdfdfd;border:1px solid #b4b4b4;box-sizing:border-box;"></div>
<div id="t112" class="t" style="left:1687px;top:844.00px;height:17px;line-height:17px;font-size:11.8px;color:#111;white-space:pre;letter-spacing:-0.984px;">Skip</div>
<div style="left:1735px;top:839px;width:68px;height:26px;background:#fdfdfd;border:1px solid #b4b4b4;box-sizing:border-box;"></div>
<div id="t113" class="t" style="left:1749px;top:844.00px;height:17px;line-height:17px;font-size:11.8px;color:#111;white-space:pre;letter-spacing:-0.773px;">Execute</div>
<div style="left:1807px;top:839px;width:68px;height:26px;background:#fdfdfd;border:1px solid #b4b4b4;box-sizing:border-box;"></div>
<div id="t114" class="t" style="left:1814px;top:844.00px;height:17px;line-height:17px;font-size:11.8px;color:#111;white-space:pre;letter-spacing:-0.637px;">Execute All</div>
<div style="left:674px;top:884px;width:1199px;height:158px;background:#fff;border:1px solid #bdbdbd;box-sizing:border-box;"></div>
<div style="left:676px;top:886px;width:1195px;height:22px;background:#f0f0f0;"></div>
<div style="left:676px;top:908px;width:1196px;height:1px;background:#a6a6a6;"></div>
<div style="left:676px;top:885px;width:1196px;height:1px;background:#e2e2e2;"></div>
<div id="t115" class="t" style="left:681.5px;top:891.00px;height:15px;line-height:15px;font-size:11px;color:#0c0c0c;white-space:pre;letter-spacing:0.341px;">Object</div>
<div style="left:1064px;top:887px;width:1px;height:20px;background:#dcdcdc;"></div>
<div id="t116" class="t" style="left:1070.5px;top:891.00px;height:15px;line-height:15px;font-size:11px;color:#0c0c0c;white-space:pre;letter-spacing:-0.375px;">Task</div>
<div style="left:1204px;top:887px;width:1px;height:20px;background:#dcdcdc;"></div>
<div id="t117" class="t" style="left:1211px;top:891.00px;height:15px;line-height:15px;font-size:11px;color:#0c0c0c;white-space:pre;letter-spacing:0.484px;">Action</div>
<div style="left:1332px;top:887px;width:1px;height:20px;background:#dcdcdc;"></div>
<div id="t118" class="t" style="left:1339px;top:891.00px;height:15px;line-height:15px;font-size:11px;color:#0c0c0c;white-space:pre;letter-spacing:0.163px;">Result</div>
<div style="left:1870px;top:887px;width:1px;height:20px;background:#dcdcdc;"></div>
<div id="t119" class="t" style="left:679.5px;top:911.00px;height:15px;line-height:15px;font-size:11px;color:#0c0c0c;white-space:pre;letter-spacing:0.177px;">public.customers_orders_statuses.tg_customersordersstatuses_shipped</div>
<div id="t120" class="t" style="left:1068.5px;top:911.00px;height:15px;line-height:15px;font-size:11px;color:#0c0c0c;white-space:pre;letter-spacing:0.227px;">Synchronize Constraint</div>
<div id="t121" class="t" style="left:1209.5px;top:911.00px;height:15px;line-height:15px;font-size:11px;color:#0c0c0c;white-space:pre;letter-spacing:0.390px;">Drop Constraint</div>
<div id="t122" class="t" style="left:1337.5px;top:911.00px;height:15px;line-height:15px;font-size:11px;color:#0c0c0c;white-space:pre;letter-spacing:0.035px;">succeeded</div>
<div id="t123" class="t" style="left:679.5px;top:931.00px;height:15px;line-height:15px;font-size:11px;color:#0c0c0c;white-space:pre;letter-spacing:0.177px;">public.customers_orders_statuses.tg_customersordersstatuses_shipped</div>
<div id="t124" class="t" style="left:1068.5px;top:931.00px;height:15px;line-height:15px;font-size:11px;color:#0c0c0c;white-space:pre;letter-spacing:0.227px;">Synchronize Constraint</div>
<div id="t125" class="t" style="left:1209.5px;top:931.00px;height:15px;line-height:15px;font-size:11px;color:#0c0c0c;white-space:pre;letter-spacing:0.364px;">Add Constraint</div>
<div id="t126" class="t" style="left:1337.5px;top:931.00px;height:15px;line-height:15px;font-size:11px;color:#0c0c0c;white-space:pre;letter-spacing:0.035px;">succeeded</div>
</body></html>
